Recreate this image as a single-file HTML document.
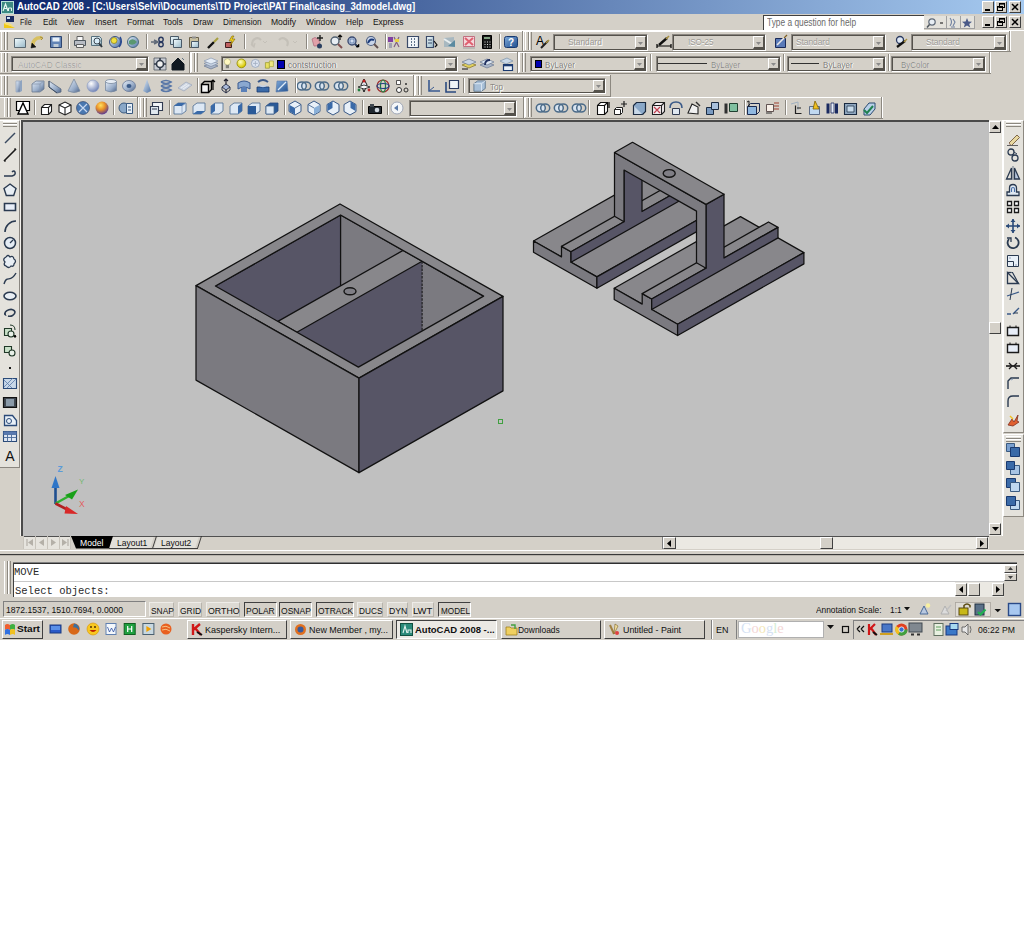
<!DOCTYPE html><html><head><meta charset="utf-8"><style>
html,body{margin:0;padding:0;background:#fff;width:1024px;height:927px;overflow:hidden}
#app{position:absolute;left:0;top:0;width:1024px;height:640px;background:#d4d0c8;overflow:hidden}
#app div, #app svg{position:absolute}
.t{white-space:nowrap;line-height:1;font-family:"Liberation Sans",sans-serif}
</style></head><body><div id="app">
<svg width="0" height="0" style="position:absolute;left:0;top:0"><defs>
<linearGradient id="gDoc" x1="0" y1="0" x2="1" y2="1"><stop offset="0" stop-color="#f4fdff"/><stop offset="1" stop-color="#98b8c8"/></linearGradient>
<linearGradient id="gBlue" x1="0" y1="0" x2="1" y2="1"><stop offset="0" stop-color="#e4eef8"/><stop offset="1" stop-color="#4f74a6"/></linearGradient>
<linearGradient id="gSolid" x1="0" y1="0" x2="1" y2="1"><stop offset="0" stop-color="#e6eef8"/><stop offset="0.6" stop-color="#98acc8"/><stop offset="1" stop-color="#4a6288"/></linearGradient>
<linearGradient id="gDarkBlue" x1="0" y1="0" x2="1" y2="1"><stop offset="0" stop-color="#7ea8d8"/><stop offset="1" stop-color="#1f4f8f"/></linearGradient>
<radialGradient id="gSphere" cx="0.35" cy="0.3" r="0.7"><stop offset="0" stop-color="#ffffff"/><stop offset="1" stop-color="#7486b8"/></radialGradient>
<radialGradient id="gOrange" cx="0.4" cy="0.3" r="0.75"><stop offset="0" stop-color="#ffe060"/><stop offset="0.45" stop-color="#e89028"/><stop offset="1" stop-color="#4a30a0"/></radialGradient>
<radialGradient id="gYellow" cx="0.4" cy="0.35" r="0.6"><stop offset="0" stop-color="#ffffc0"/><stop offset="1" stop-color="#d8c800"/></radialGradient>
</defs></svg>
<div style="left:0px;top:0px;width:1024px;height:14px;background:linear-gradient(to right,#0a246a 0%,#a6caf0 100%)"></div>
<div style="left:1px;top:1px;width:13px;height:13px;background:#3d8a82;border:1px solid #b8e0d8;box-sizing:border-box"></div>
<svg style="left:2px;top:2px" width="11" height="11"><path d="M1,9 L3.5,2 L6,9 M2,6.5 h3" stroke="#eaf6f2" stroke-width="1.2" fill="none"/><path d="M6.5,9 v-3 h3 v3" stroke="#eaf6f2" stroke-width="1" fill="none"/></svg>
<div class="t" style="left:16.50px;top:1.98px;font-size:10.30px;color:#fff;font-weight:bold;font-family:'Liberation Sans',sans-serif;transform:scaleX(0.9350);transform-origin:0 0;">AutoCAD 2008 - [C:\Users\Selvi\Documents\TD Project\PAT Final\casing_3dmodel.dwg]</div>
<div style="left:982px;top:1px;width:12px;height:12px;background:#d4d0c8;border-top:1px solid #fff;border-left:1px solid #fff;border-right:1px solid #404040;border-bottom:1px solid #404040;box-sizing:border-box"></div>
<div style="left:985px;top:9px;width:5px;height:2px;background:#000"></div>
<div style="left:995px;top:1px;width:12px;height:12px;background:#d4d0c8;border-top:1px solid #fff;border-left:1px solid #fff;border-right:1px solid #404040;border-bottom:1px solid #404040;box-sizing:border-box"></div>
<svg style="left:996px;top:2px" width="10" height="10"><rect x="1.5" y="4.5" width="5" height="4" fill="none" stroke="#000"/><rect x="3.5" y="1.5" width="5" height="4" fill="none" stroke="#000"/><rect x="3" y="1" width="6" height="1.6" fill="#000"/><rect x="1" y="4" width="6" height="1.6" fill="#000"/></svg>
<div style="left:1009px;top:1px;width:12px;height:12px;background:#d4d0c8;border-top:1px solid #fff;border-left:1px solid #fff;border-right:1px solid #404040;border-bottom:1px solid #404040;box-sizing:border-box"></div>
<svg style="left:1010px;top:2px" width="10" height="10"><path d="M2,2 L8,8 M8,2 L2,8" stroke="#000" stroke-width="1.5"/></svg>
<div class="t" style="left:20.40px;top:18.01px;font-size:9.20px;color:#141414;font-weight:normal;font-family:'Liberation Sans',sans-serif;transform:scaleX(0.7962);transform-origin:0 0;">File</div>
<div class="t" style="left:42.50px;top:18.01px;font-size:9.20px;color:#141414;font-weight:normal;font-family:'Liberation Sans',sans-serif;transform:scaleX(0.8832);transform-origin:0 0;">Edit</div>
<div class="t" style="left:66.60px;top:18.01px;font-size:9.20px;color:#141414;font-weight:normal;font-family:'Liberation Sans',sans-serif;transform:scaleX(0.8688);transform-origin:0 0;">View</div>
<div class="t" style="left:94.50px;top:18.01px;font-size:9.20px;color:#141414;font-weight:normal;font-family:'Liberation Sans',sans-serif;transform:scaleX(0.9605);transform-origin:0 0;">Insert</div>
<div class="t" style="left:126.70px;top:18.01px;font-size:9.20px;color:#141414;font-weight:normal;font-family:'Liberation Sans',sans-serif;transform:scaleX(0.9232);transform-origin:0 0;">Format</div>
<div class="t" style="left:163.30px;top:18.01px;font-size:9.20px;color:#141414;font-weight:normal;font-family:'Liberation Sans',sans-serif;transform:scaleX(0.9174);transform-origin:0 0;">Tools</div>
<div class="t" style="left:192.70px;top:18.01px;font-size:9.20px;color:#141414;font-weight:normal;font-family:'Liberation Sans',sans-serif;transform:scaleX(0.9306);transform-origin:0 0;">Draw</div>
<div class="t" style="left:222.60px;top:18.01px;font-size:9.20px;color:#141414;font-weight:normal;font-family:'Liberation Sans',sans-serif;transform:scaleX(0.8882);transform-origin:0 0;">Dimension</div>
<div class="t" style="left:270.90px;top:18.01px;font-size:9.20px;color:#141414;font-weight:normal;font-family:'Liberation Sans',sans-serif;transform:scaleX(0.9264);transform-origin:0 0;">Modify</div>
<div class="t" style="left:306.30px;top:18.01px;font-size:9.20px;color:#141414;font-weight:normal;font-family:'Liberation Sans',sans-serif;transform:scaleX(0.9193);transform-origin:0 0;">Window</div>
<div class="t" style="left:345.60px;top:18.01px;font-size:9.20px;color:#141414;font-weight:normal;font-family:'Liberation Sans',sans-serif;transform:scaleX(0.8983);transform-origin:0 0;">Help</div>
<div class="t" style="left:372.50px;top:18.01px;font-size:9.20px;color:#141414;font-weight:normal;font-family:'Liberation Sans',sans-serif;transform:scaleX(0.9178);transform-origin:0 0;">Express</div>
<svg style="left:3px;top:15px" width="14" height="14"><path d="M1,8 L12,13 L1,13z" fill="#f0c818"/><path d="M1,9 Q4,5 11,12" fill="#f8e070"/><rect x="3" y="1" width="8" height="6" fill="#1a2a60"/><rect x="4" y="2" width="3" height="2" fill="#d0e0f0"/></svg>
<div style="left:763px;top:15px;width:161px;height:15px;background:#fff;border-top:1px solid #404040;border-left:1px solid #404040;box-sizing:border-box"></div>
<div class="t" style="left:767.00px;top:18.14px;font-size:10.00px;color:#6a6a6a;font-weight:normal;font-family:'Liberation Sans',sans-serif;transform:scaleX(0.8347);transform-origin:0 0;">Type a question for help</div>
<div style="left:924px;top:16px;width:23px;height:13px;background:#e4e2dc;border-right:1px solid #a0a0a0;border-bottom:1px solid #a0a0a0;box-sizing:border-box"></div>
<div style="left:947px;top:16px;width:14px;height:13px;background:#e4e2dc;border-right:1px solid #a0a0a0;border-bottom:1px solid #a0a0a0;box-sizing:border-box"></div>
<div style="left:961px;top:16px;width:14px;height:13px;background:#e4e2dc;border-right:1px solid #a0a0a0;border-bottom:1px solid #a0a0a0;box-sizing:border-box"></div>
<svg style="left:926px;top:17px" width="48" height="12"><circle cx="6" cy="5" r="3.2" fill="#e8eef4" stroke="#606a78" stroke-width="1.2"/><path d="M3.5,7.5 l-2.5,3" stroke="#505860" stroke-width="1.5"/><path d="M14,6 h3" stroke="#303030" stroke-width="1.2"/><path d="M24,1 q3,4 0,8 M27,2 l2,3 -2,4 M25,10 h4" stroke="#7080a0" stroke-width="1.1" fill="none"/><path d="M41,1 l1.4,3.5 3.6,0.2 -2.8,2.3 1,3.6 -3.2,-2.1 -3.2,2.1 1,-3.6 -2.8,-2.3 3.6,-0.2z" fill="#4a5a88"/></svg>
<div style="left:982px;top:16px;width:12px;height:12px;background:#d4d0c8;border-top:1px solid #fff;border-left:1px solid #fff;border-right:1px solid #404040;border-bottom:1px solid #404040;box-sizing:border-box"></div>
<div style="left:985px;top:24px;width:5px;height:2px;background:#000"></div>
<div style="left:995px;top:16px;width:12px;height:12px;background:#d4d0c8;border-top:1px solid #fff;border-left:1px solid #fff;border-right:1px solid #404040;border-bottom:1px solid #404040;box-sizing:border-box"></div>
<svg style="left:996px;top:17px" width="10" height="10"><rect x="1.5" y="4.5" width="5" height="4" fill="none" stroke="#000"/><rect x="3.5" y="1.5" width="5" height="4" fill="none" stroke="#000"/><rect x="3" y="1" width="6" height="1.6" fill="#000"/><rect x="1" y="4" width="6" height="1.6" fill="#000"/></svg>
<div style="left:1009px;top:16px;width:12px;height:12px;background:#d4d0c8;border-top:1px solid #fff;border-left:1px solid #fff;border-right:1px solid #404040;border-bottom:1px solid #404040;box-sizing:border-box"></div>
<svg style="left:1010px;top:17px" width="10" height="10"><path d="M2,2 L8,8 M8,2 L2,8" stroke="#000" stroke-width="1.5"/></svg>
<div style="left:0px;top:30px;width:1024px;height:1px;background:#fff"></div>
<div style="left:0px;top:31px;width:1024px;height:1px;background:#fff"></div>
<div style="left:0px;top:51px;width:1024px;height:1px;background:#8c8880"></div>
<div style="left:0px;top:52px;width:1024px;height:1px;background:#fff"></div>
<div style="left:0px;top:73px;width:1024px;height:1px;background:#8c8880"></div>
<div style="left:0px;top:75px;width:1024px;height:1px;background:#fff"></div>
<div style="left:0px;top:96px;width:1024px;height:1px;background:#8c8880"></div>
<div style="left:0px;top:97px;width:1024px;height:1px;background:#fff"></div>
<div style="left:0px;top:118px;width:1024px;height:1px;background:#8c8880"></div>
<div style="left:0px;top:74px;width:1024px;height:1px;background:#d4d0c8"></div>
<div style="left:1px;top:32px;width:1px;height:18px;background:#fff"></div>
<div style="left:4px;top:32px;width:1px;height:18px;background:#8c8880"></div>
<div style="left:5px;top:32px;width:1px;height:18px;background:#fff"></div>
<div style="left:7px;top:32px;width:1px;height:18px;background:#8c8880"></div>
<svg style="position:absolute;left:11.5px;top:33.5px;overflow:visible" width="16.0" height="16.0" viewBox="0 0 16 16"><path d="M2.5,4.5 h9 l2,1.5 v7.5 h-11z" fill="url(#gDoc)" stroke="#5a6872" stroke-width="1"/></svg>
<svg style="position:absolute;left:30.0px;top:33.5px;overflow:visible" width="16.0" height="16.0" viewBox="0 0 16 16"><path d="M3,12 C2,7 6,3 12,4" fill="none" stroke="#d8c060" stroke-width="3.5"/><path d="M2,9 l4,4 l-5,1z" fill="#111" stroke="#111" stroke-width="0.5"/><path d="M10,3 l3,1 -2,2" fill="none" stroke="#a89040" stroke-width="1"/></svg>
<svg style="position:absolute;left:48.0px;top:33.5px;overflow:visible" width="16.0" height="16.0" viewBox="0 0 16 16"><path d="M2.5,2.5 h11 v11 h-11z" fill="#6284b6" stroke="#2f4670" stroke-width="1"/><path d="M4.5,3.5 h7 v4 h-7z" fill="#e8f0f8" stroke="none" stroke-width="1"/><path d="M5.5,10 h5 v3 h-5z" fill="#c0ccd8" stroke="none" stroke-width="1"/></svg>
<svg style="position:absolute;left:71.5px;top:33.5px;overflow:visible" width="16.0" height="16.0" viewBox="0 0 16 16"><path d="M5,2.5 h6 v4 h-6z" fill="#fafafa" stroke="#606060" stroke-width="1"/><path d="M2.5,6.5 h11 v5 h-11z" fill="#b8bcc4" stroke="#505860" stroke-width="1"/><path d="M4.5,10.5 h7 v3 h-7z" fill="#f0f0f0" stroke="#606060" stroke-width="1"/></svg>
<svg style="position:absolute;left:89.0px;top:33.5px;overflow:visible" width="16.0" height="16.0" viewBox="0 0 16 16"><path d="M2.5,2.5 h8 l2,2 v7 h-10z" fill="url(#gDoc)" stroke="#56707e" stroke-width="1"/><path d="M9,8 l4,5" fill="none" stroke="#303840" stroke-width="2"/><circle cx="8" cy="7" r="3" fill="#d8ecf8" stroke="#404a54"/></svg>
<svg style="position:absolute;left:107.5px;top:33.5px;overflow:visible" width="16.0" height="16.0" viewBox="0 0 16 16"><circle cx="7" cy="8" r="5.5" fill="url(#gBlue)" stroke="#3a5080"/><circle cx="6" cy="6.5" r="3" fill="#f0e040" stroke="#807000" stroke-width="0.6"/><path d="M12,3 q3,5 -1,10" fill="none" stroke="#2a4a90" stroke-width="1.6"/></svg>
<svg style="position:absolute;left:125.0px;top:33.5px;overflow:visible" width="16.0" height="16.0" viewBox="0 0 16 16"><circle cx="8" cy="8" r="5.5" fill="url(#gBlue)" stroke="#4a6a80"/><path d="M4,7 q4,-4 8,1 q-3,4 -8,2z" fill="#5a9870" stroke="none" stroke-width="1"/></svg>
<svg style="position:absolute;left:150.0px;top:33.5px;overflow:visible" width="16.0" height="16.0" viewBox="0 0 16 16"><path d="M1,8 h7 M4,6 l4,2 l-4,2" fill="none" stroke="#606a78" stroke-width="1.4"/><circle cx="11" cy="5.5" r="2.2" fill="none" stroke="#2a3a60" stroke-width="1.4"/><circle cx="11" cy="10.5" r="2.2" fill="none" stroke="#2a3a60" stroke-width="1.4"/></svg>
<svg style="position:absolute;left:168.0px;top:33.5px;overflow:visible" width="16.0" height="16.0" viewBox="0 0 16 16"><path d="M2.5,2.5 h8 v8 h-8z" fill="url(#gDoc)" stroke="#4a5a68" stroke-width="1"/><path d="M5.5,5.5 h8 v8 h-8z" fill="url(#gDoc)" stroke="#4a5a68" stroke-width="1"/></svg>
<svg style="position:absolute;left:186.0px;top:33.5px;overflow:visible" width="16.0" height="16.0" viewBox="0 0 16 16"><path d="M3.5,3.5 h9 v10 h-9z" fill="#c8c0a0" stroke="#6a6048" stroke-width="1"/><path d="M5.5,7.5 h7 v6 h-7z" fill="url(#gDoc)" stroke="#4a5a68" stroke-width="1"/><path d="M6,2.5 h4 v2 h-4z" fill="#909090" stroke="none" stroke-width="1"/></svg>
<svg style="position:absolute;left:205.0px;top:33.5px;overflow:visible" width="16.0" height="16.0" viewBox="0 0 16 16"><path d="M3,14 l6,-6" fill="none" stroke="#111" stroke-width="2.4"/><path d="M9,8 l4,-4" fill="none" stroke="#a8a040" stroke-width="2.2"/></svg>
<svg style="position:absolute;left:223.0px;top:33.5px;overflow:visible" width="16.0" height="16.0" viewBox="0 0 16 16"><path d="M2.5,8.5 h6 v5 h-6z" fill="#c06060" stroke="#402020" stroke-width="1"/><path d="M9,2 l-3,5 h3 l-2,5 l5,-7 h-3 l2,-3z" fill="#f0d020" stroke="#806800" stroke-width="0.6"/></svg>
<svg style="position:absolute;left:249.0px;top:33.5px;overflow:visible" width="16.0" height="16.0" viewBox="0 0 16 16"><path d="M4,12 C1,6 8,2 12,6" fill="none" stroke="#c4c0b8" stroke-width="2.2"/><path d="M2,10 l3,3 1,-4" fill="none" stroke="#c4c0b8" stroke-width="1.2"/></svg>
<svg style="position:absolute;left:262.0px;top:33.5px;overflow:visible" width="16.0" height="16.0" viewBox="0 0 16 16"><path d="M1,7 l2,2 l2,-2" fill="none" stroke="#c4c0b8" stroke-width="1"/></svg>
<svg style="position:absolute;left:274.5px;top:33.5px;overflow:visible" width="16.0" height="16.0" viewBox="0 0 16 16"><path d="M12,12 C15,6 8,2 4,6" fill="none" stroke="#c4c0b8" stroke-width="2.2"/></svg>
<svg style="position:absolute;left:291.5px;top:33.5px;overflow:visible" width="16.0" height="16.0" viewBox="0 0 16 16"><path d="M1,7 l2,2 l2,-2" fill="none" stroke="#c4c0b8" stroke-width="1"/></svg>
<svg style="position:absolute;left:308.5px;top:33.5px;overflow:visible" width="16.0" height="16.0" viewBox="0 0 16 16"><path d="M3,5 q3,-3 6,0 l2,4 q-2,4 -6,3z" fill="#e0a0a8" stroke="#b07080" stroke-width="0.8"/><path d="M11,1 v6 M8,4 h6" fill="none" stroke="#202020" stroke-width="1.4"/><circle cx="10.5" cy="12" r="2.5" fill="#2a3f60"/></svg>
<svg style="position:absolute;left:327.7px;top:33.5px;overflow:visible" width="16.0" height="16.0" viewBox="0 0 16 16"><circle cx="7" cy="7" r="4" fill="#e8eef4" stroke="#506070" stroke-width="1.4"/><path d="M10,10 l4,4" fill="none" stroke="#805050" stroke-width="2"/><path d="M12,1 v5 M10,3 l2,-2 2,2" fill="none" stroke="#101010" stroke-width="1.2"/></svg>
<svg style="position:absolute;left:345.0px;top:33.5px;overflow:visible" width="16.0" height="16.0" viewBox="0 0 16 16"><circle cx="7" cy="7" r="4" fill="#d0dcf0" stroke="#3a4a70" stroke-width="1.4"/><path d="M10,10 l3,3" fill="none" stroke="#304060" stroke-width="2"/><path d="M11,13 h3 v-3z" fill="#000" stroke="#000" stroke-width="0.5"/><path d="M5,5 h4 v4 h-4z" fill="none" stroke="#5070a0" stroke-width="0.8"/></svg>
<svg style="position:absolute;left:363.7px;top:33.5px;overflow:visible" width="16.0" height="16.0" viewBox="0 0 16 16"><circle cx="7" cy="7" r="4.5" fill="#c8d4e8" stroke="#506080" stroke-width="1.2"/><path d="M10,10 l4,4" fill="none" stroke="#605050" stroke-width="2"/><path d="M4,9 q2,-5 6,-3" fill="none" stroke="#1a3a7a" stroke-width="2"/></svg>
<svg style="position:absolute;left:386.4px;top:33.5px;overflow:visible" width="16.0" height="16.0" viewBox="0 0 16 16"><path d="M2,3 h5 v5 h-5z" fill="#8040a0" stroke="none" stroke-width="1"/><path d="M8,3 l5,10 M13,3 l-5,10" fill="none" stroke="#806080" stroke-width="1.2"/><path d="M3,9 h3 v5 h-3z" fill="#a0a0b0" stroke="none" stroke-width="1"/><path d="M9,5 h4 v3 h-4z" fill="#e8d040" stroke="none" stroke-width="1"/></svg>
<svg style="position:absolute;left:405.4px;top:33.5px;overflow:visible" width="16.0" height="16.0" viewBox="0 0 16 16"><path d="M2.5,2.5 h11 v11 h-11z" fill="#f0f4f8" stroke="#3a4a68" stroke-width="1.2"/><path d="M6,5 h1 M9,5 h1 M6,8 h1 M9,8 h1 M6,11 h1 M9,11 h1" fill="none" stroke="#304868" stroke-width="1.6"/></svg>
<svg style="position:absolute;left:424.0px;top:33.5px;overflow:visible" width="16.0" height="16.0" viewBox="0 0 16 16"><path d="M2.5,2.5 h7 v11 h-7z" fill="url(#gDoc)" stroke="#3a4a68" stroke-width="1.2"/><path d="M4,6 h4 M4,9 h4" fill="none" stroke="#3a4a68" stroke-width="1"/><path d="M10,7 l3,4 l-2,2" fill="none" stroke="#101010" stroke-width="1.2"/></svg>
<svg style="position:absolute;left:441.6px;top:33.5px;overflow:visible" width="16.0" height="16.0" viewBox="0 0 16 16"><path d="M2,4 l10,-1 v10 l-10,0z" fill="#a8b8c0" stroke="none" stroke-width="1"/><path d="M2,5 l8,5" fill="none" stroke="#e8eef0" stroke-width="2"/><path d="M6,12 l7,-6 v7z" fill="#5a8aa0" stroke="none" stroke-width="1"/></svg>
<svg style="position:absolute;left:460.8px;top:33.5px;overflow:visible" width="16.0" height="16.0" viewBox="0 0 16 16"><path d="M2.5,2.5 h11 v10 h-11z" fill="#f4d8dc" stroke="#c07080" stroke-width="1"/><path d="M4,4 l8,7 M12,4 l-8,7" fill="none" stroke="#e06070" stroke-width="2"/><path d="M2,14 h12" fill="none" stroke="#a0a0a0" stroke-width="1"/></svg>
<svg style="position:absolute;left:479.0px;top:33.5px;overflow:visible" width="16.0" height="16.0" viewBox="0 0 16 16"><path d="M3.5,1.5 h9 v13 h-9z" fill="#181818" stroke="#000" stroke-width="1"/><path d="M5,3 h6 v2 h-6z" fill="#80a080" stroke="none" stroke-width="1"/><path d="M5.5,8 h1 M8,8 h1 M10.5,8 h1 M5.5,10.5 h1 M8,10.5 h1 M10.5,10.5 h1 M5.5,13 h1 M8,13 h1 M10.5,13 h1" fill="none" stroke="#e0e0e0" stroke-width="1.2"/></svg>
<svg style="position:absolute;left:502.5px;top:33.5px;overflow:visible" width="16.0" height="16.0" viewBox="0 0 16 16"><rect x="1.5" y="2.5" width="13" height="11" rx="2" fill="url(#gDarkBlue)" stroke="#1a3a70"/><text x="8" y="12" font-family="Liberation Sans" font-weight="bold" font-size="10" fill="#fff" text-anchor="middle">?</text></svg>
<div style="left:68px;top:34px;width:1px;height:15px;background:#8c8880"></div>
<div style="left:69px;top:34px;width:1px;height:15px;background:#fff"></div>
<div style="left:146px;top:34px;width:1px;height:15px;background:#8c8880"></div>
<div style="left:147px;top:34px;width:1px;height:15px;background:#fff"></div>
<div style="left:243.6px;top:34px;width:1px;height:15px;background:#8c8880"></div>
<div style="left:244.6px;top:34px;width:1px;height:15px;background:#fff"></div>
<div style="left:305.5px;top:34px;width:1px;height:15px;background:#8c8880"></div>
<div style="left:306.5px;top:34px;width:1px;height:15px;background:#fff"></div>
<div style="left:384.5px;top:34px;width:1px;height:15px;background:#8c8880"></div>
<div style="left:385.5px;top:34px;width:1px;height:15px;background:#fff"></div>
<div style="left:499px;top:34px;width:1px;height:15px;background:#8c8880"></div>
<div style="left:500px;top:34px;width:1px;height:15px;background:#fff"></div>
<div style="left:522px;top:31px;width:1px;height:20px;background:#8c8880"></div>
<div style="left:523px;top:31px;width:1px;height:20px;background:#fff"></div>
<div style="left:525px;top:32px;width:1px;height:18px;background:#fff"></div>
<div style="left:528px;top:32px;width:1px;height:18px;background:#8c8880"></div>
<div style="left:529px;top:32px;width:1px;height:18px;background:#fff"></div>
<div style="left:531px;top:32px;width:1px;height:18px;background:#8c8880"></div>
<svg style="position:absolute;left:535.0px;top:33.5px;overflow:visible" width="16.0" height="16.0" viewBox="0 0 16 16"><text x="1" y="11" font-family="Liberation Sans" font-size="12" fill="#000">A</text><path d="M6,14 l7,-7" fill="none" stroke="#202020" stroke-width="2"/><path d="M11,9 l3,-3" fill="none" stroke="#a89040" stroke-width="1.6"/></svg>
<div style="left:553px;top:34px;width:94.7px;height:17px;background:#d4d0c8;border-top:1px solid #8a8680;border-left:1px solid #8a8680;border-right:1px solid #fff;border-bottom:1px solid #fff;box-sizing:border-box"></div>
<div style="left:554px;top:35px;width:92.7px;height:15px;border:1px solid #55524c;box-sizing:border-box"></div>
<div style="left:634.7px;top:36px;width:11px;height:13px;background:#d4d0c8;border-top:1px solid #fff;border-left:1px solid #fff;border-right:1px solid #55524c;border-bottom:2px solid #55524c;box-sizing:border-box"></div>
<svg style="left:637.7px;top:41.5px" width="5" height="3"><path d="M0,0 L5,0 L2.5,3z" fill="#8a8a8a"/></svg>
<div class="t" style="left:568.60px;top:38.07px;font-size:9.60px;color:#fff;font-weight:normal;font-family:'Liberation Sans',sans-serif;transform:scaleX(0.8674);transform-origin:0 0;">Standard</div>
<div class="t" style="left:568.00px;top:37.47px;font-size:9.60px;color:#9c9a96;font-weight:normal;font-family:'Liberation Sans',sans-serif;transform:scaleX(0.8674);transform-origin:0 0;">Standard</div>
<svg style="position:absolute;left:655.5px;top:33.5px;overflow:visible" width="16.0" height="16.0" viewBox="0 0 16 16"><path d="M1,12 h14 M1,10 v4 M15,10 v4" fill="none" stroke="#000" stroke-width="1.2"/><path d="M3,11 l8,-7" fill="none" stroke="#101010" stroke-width="2.4"/><path d="M10,5 l3,-3" fill="none" stroke="#a89040" stroke-width="1.6"/></svg>
<div style="left:672.4px;top:34px;width:93.9px;height:17px;background:#d4d0c8;border-top:1px solid #8a8680;border-left:1px solid #8a8680;border-right:1px solid #fff;border-bottom:1px solid #fff;box-sizing:border-box"></div>
<div style="left:673.4px;top:35px;width:91.9px;height:15px;border:1px solid #55524c;box-sizing:border-box"></div>
<div style="left:753.3px;top:36px;width:11px;height:13px;background:#d4d0c8;border-top:1px solid #fff;border-left:1px solid #fff;border-right:1px solid #55524c;border-bottom:2px solid #55524c;box-sizing:border-box"></div>
<svg style="left:756.3px;top:41.5px" width="5" height="3"><path d="M0,0 L5,0 L2.5,3z" fill="#8a8a8a"/></svg>
<div class="t" style="left:688.40px;top:38.07px;font-size:9.60px;color:#fff;font-weight:normal;font-family:'Liberation Sans',sans-serif;transform:scaleX(0.8385);transform-origin:0 0;">ISO-25</div>
<div class="t" style="left:687.80px;top:37.47px;font-size:9.60px;color:#9c9a96;font-weight:normal;font-family:'Liberation Sans',sans-serif;transform:scaleX(0.8385);transform-origin:0 0;">ISO-25</div>
<svg style="position:absolute;left:772.6px;top:33.5px;overflow:visible" width="16.0" height="16.0" viewBox="0 0 16 16"><path d="M2.5,4.5 h10 v9 h-10z" fill="#5a7ab8" stroke="#1a2a58" stroke-width="1"/><path d="M4,11 l9,-9" fill="none" stroke="#e8e8e8" stroke-width="1.6"/><path d="M11,4 l3,-3" fill="none" stroke="#806020" stroke-width="1.2"/></svg>
<div style="left:791px;top:34px;width:94.5px;height:17px;background:#d4d0c8;border-top:1px solid #8a8680;border-left:1px solid #8a8680;border-right:1px solid #fff;border-bottom:1px solid #fff;box-sizing:border-box"></div>
<div style="left:792px;top:35px;width:92.5px;height:15px;border:1px solid #55524c;box-sizing:border-box"></div>
<div style="left:872.5px;top:36px;width:11px;height:13px;background:#d4d0c8;border-top:1px solid #fff;border-left:1px solid #fff;border-right:1px solid #55524c;border-bottom:2px solid #55524c;box-sizing:border-box"></div>
<svg style="left:875.5px;top:41.5px" width="5" height="3"><path d="M0,0 L5,0 L2.5,3z" fill="#8a8a8a"/></svg>
<div class="t" style="left:796.10px;top:38.07px;font-size:9.60px;color:#fff;font-weight:normal;font-family:'Liberation Sans',sans-serif;transform:scaleX(0.8674);transform-origin:0 0;">Standard</div>
<div class="t" style="left:795.50px;top:37.47px;font-size:9.60px;color:#9c9a96;font-weight:normal;font-family:'Liberation Sans',sans-serif;transform:scaleX(0.8674);transform-origin:0 0;">Standard</div>
<svg style="position:absolute;left:893.0px;top:33.5px;overflow:visible" width="16.0" height="16.0" viewBox="0 0 16 16"><circle cx="7" cy="6" r="3.5" fill="#dfe8f4" stroke="#2a3a60" stroke-width="1.3"/><path d="M4,13 l8,-6" fill="none" stroke="#101010" stroke-width="2.2"/><path d="M11,8 l3,-3" fill="none" stroke="#a89040" stroke-width="1.4"/></svg>
<div style="left:910.8px;top:34px;width:96.6px;height:17px;background:#d4d0c8;border-top:1px solid #8a8680;border-left:1px solid #8a8680;border-right:1px solid #fff;border-bottom:1px solid #fff;box-sizing:border-box"></div>
<div style="left:911.8px;top:35px;width:94.6px;height:15px;border:1px solid #55524c;box-sizing:border-box"></div>
<div style="left:994.4px;top:36px;width:11px;height:13px;background:#d4d0c8;border-top:1px solid #fff;border-left:1px solid #fff;border-right:1px solid #55524c;border-bottom:2px solid #55524c;box-sizing:border-box"></div>
<svg style="left:997.4px;top:41.5px" width="5" height="3"><path d="M0,0 L5,0 L2.5,3z" fill="#8a8a8a"/></svg>
<div class="t" style="left:926.10px;top:38.07px;font-size:9.60px;color:#fff;font-weight:normal;font-family:'Liberation Sans',sans-serif;transform:scaleX(0.8674);transform-origin:0 0;">Standard</div>
<div class="t" style="left:925.50px;top:37.47px;font-size:9.60px;color:#9c9a96;font-weight:normal;font-family:'Liberation Sans',sans-serif;transform:scaleX(0.8674);transform-origin:0 0;">Standard</div>
<div style="left:1009px;top:31px;width:1px;height:20px;background:#8c8880"></div>
<div style="left:1010px;top:31px;width:1px;height:20px;background:#fff"></div>
<div style="left:1011px;top:31px;width:13px;height:21px;background:#d4d0c8"></div>
<div style="left:1px;top:53px;width:1px;height:19px;background:#fff"></div>
<div style="left:4px;top:53px;width:1px;height:19px;background:#8c8880"></div>
<div style="left:5px;top:53px;width:1px;height:19px;background:#fff"></div>
<div style="left:7px;top:53px;width:1px;height:19px;background:#8c8880"></div>
<div style="left:11.4px;top:56px;width:137.2px;height:16px;background:#d4d0c8;border-top:1px solid #8a8680;border-left:1px solid #8a8680;border-right:1px solid #fff;border-bottom:1px solid #fff;box-sizing:border-box"></div>
<div style="left:12.4px;top:57px;width:135.2px;height:14px;border:1px solid #55524c;box-sizing:border-box"></div>
<div style="left:135.6px;top:58px;width:11px;height:12px;background:#d4d0c8;border-top:1px solid #fff;border-left:1px solid #fff;border-right:1px solid #55524c;border-bottom:2px solid #55524c;box-sizing:border-box"></div>
<svg style="left:138.6px;top:63px" width="5" height="3"><path d="M0,0 L5,0 L2.5,3z" fill="#8a8a8a"/></svg>
<div class="t" style="left:18.10px;top:61.21px;font-size:9.20px;color:#fff;font-weight:normal;font-family:'Liberation Sans',sans-serif;transform:scaleX(0.9043);transform-origin:0 0;">AutoCAD Classic</div>
<div class="t" style="left:17.50px;top:60.61px;font-size:9.20px;color:#9c9a96;font-weight:normal;font-family:'Liberation Sans',sans-serif;transform:scaleX(0.9043);transform-origin:0 0;">AutoCAD Classic</div>
<svg style="position:absolute;left:151.5px;top:55.5px;overflow:visible" width="16.0" height="16.0" viewBox="0 0 16 16"><path d="M2,2 h12 v12 h-12z" fill="#c8ccd4" stroke="#505860" stroke-width="0.8"/><circle cx="8" cy="8" r="3.5" fill="#f0f0f0" stroke="#303a48" stroke-width="1.6"/><path d="M8,2 v3 M8,11 v3 M2,8 h3 M11,8 h3" fill="none" stroke="#303a48" stroke-width="1.6"/></svg>
<svg style="position:absolute;left:169.8px;top:55.5px;overflow:visible" width="16.0" height="16.0" viewBox="0 0 16 16"><path d="M2,8 l6,-6 l6,6 v6 h-12z" fill="#101820" stroke="#101820" stroke-width="1"/><path d="M12,2 l2,2" fill="none" stroke="#607080" stroke-width="1"/></svg>
<div style="left:189px;top:52px;width:1px;height:21px;background:#8c8880"></div>
<div style="left:190px;top:52px;width:1px;height:21px;background:#fff"></div>
<div style="left:191px;top:53px;width:1px;height:19px;background:#fff"></div>
<div style="left:194px;top:53px;width:1px;height:19px;background:#8c8880"></div>
<div style="left:195px;top:53px;width:1px;height:19px;background:#fff"></div>
<div style="left:197px;top:53px;width:1px;height:19px;background:#8c8880"></div>
<svg style="position:absolute;left:202.8px;top:55.5px;overflow:visible" width="16.0" height="16.0" viewBox="0 0 16 16"><path d="M1,10 l7,-3 l7,3 l-7,3z" fill="#a8b4c8" stroke="#6a7890" stroke-width="0.7"/><path d="M1,7.5 l7,-3 l7,3 l-7,3z" fill="#c8d4e4" stroke="#7a88a0" stroke-width="0.7"/><path d="M1,5 l7,-3 l7,3 l-7,3z" fill="#e4ecf6" stroke="#8a98b0" stroke-width="0.7"/></svg>
<div style="left:221px;top:56px;width:236.8px;height:16px;background:#d4d0c8;border-top:1px solid #8a8680;border-left:1px solid #8a8680;border-right:1px solid #fff;border-bottom:1px solid #fff;box-sizing:border-box"></div>
<div style="left:222px;top:57px;width:234.8px;height:14px;border:1px solid #55524c;box-sizing:border-box"></div>
<div style="left:444.8px;top:58px;width:11px;height:12px;background:#d4d0c8;border-top:1px solid #fff;border-left:1px solid #fff;border-right:1px solid #55524c;border-bottom:2px solid #55524c;box-sizing:border-box"></div>
<svg style="left:447.8px;top:63px" width="5" height="3"><path d="M0,0 L5,0 L2.5,3z" fill="#8a8a8a"/></svg>
<div class="t" style="left:288.90px;top:61.21px;font-size:9.20px;color:#fff;font-weight:normal;font-family:'Liberation Sans',sans-serif;transform:scaleX(0.9338);transform-origin:0 0;">contstruction</div>
<div class="t" style="left:288.30px;top:60.61px;font-size:9.20px;color:#7a7a7a;font-weight:normal;font-family:'Liberation Sans',sans-serif;transform:scaleX(0.9338);transform-origin:0 0;">contstruction</div>
<svg style="position:absolute;left:221.1px;top:57.1px;overflow:visible" width="12.8" height="12.8" viewBox="0 0 16 16"><circle cx="8" cy="6" r="4" fill="#fff8c0" stroke="#a0a070" stroke-width="0.8"/><path d="M6,10 h4 v4 h-4z" fill="#808078" stroke="none" stroke-width="1"/></svg>
<svg style="position:absolute;left:234.6px;top:57.1px;overflow:visible" width="12.8" height="12.8" viewBox="0 0 16 16"><circle cx="8" cy="8" r="5.5" fill="url(#gYellow)" stroke="#908800" stroke-width="1"/></svg>
<svg style="position:absolute;left:249.1px;top:57.1px;overflow:visible" width="12.8" height="12.8" viewBox="0 0 16 16"><circle cx="8" cy="8" r="5" fill="#dde4f0" stroke="#90a0b8" stroke-width="1"/><path d="M5,8 h6 M8,5 v6" fill="none" stroke="#a0acc0" stroke-width="1"/></svg>
<svg style="position:absolute;left:262.6px;top:57.1px;overflow:visible" width="12.8" height="12.8" viewBox="0 0 16 16"><path d="M3,7 h5 v7 h-5z" fill="#e8e060" stroke="#909020" stroke-width="0.8"/><path d="M8,5 h5 v7 h-5z" fill="#f0e880" stroke="#a0a030" stroke-width="0.8"/></svg>
<div style="left:277px;top:59.5px;width:8px;height:9px;background:#0000b0;border:1px solid #000;box-sizing:border-box"></div>
<svg style="position:absolute;left:460.8px;top:55.5px;overflow:visible" width="16.0" height="16.0" viewBox="0 0 16 16"><path d="M1,9 l7,-3 l7,3 l-7,3z" fill="#e0d060" stroke="#807020" stroke-width="0.7"/><path d="M1,6 l7,-3 l7,3 l-7,3z" fill="#c8d4e4" stroke="#6a7890" stroke-width="0.7"/><path d="M1,13 h6" fill="none" stroke="#303030" stroke-width="1.2"/></svg>
<svg style="position:absolute;left:479.4px;top:55.5px;overflow:visible" width="16.0" height="16.0" viewBox="0 0 16 16"><path d="M1,9 l7,-3 l7,3 l-7,3z" fill="#a8b4c8" stroke="#6a7890" stroke-width="0.7"/><path d="M1,6 l7,-3 l7,3 l-7,3z" fill="#dce6f2" stroke="#6a7890" stroke-width="0.7"/><path d="M6,9 q0,-5 5,-5" fill="none" stroke="#203060" stroke-width="1.8"/></svg>
<svg style="position:absolute;left:497.7px;top:55.5px;overflow:visible" width="16.0" height="16.0" viewBox="0 0 16 16"><path d="M2,5 l7,-3 l6,3 l-7,3z" fill="#c8d8e8" stroke="#7a90a8" stroke-width="0.7"/><path d="M5.5,8.5 h9 v6 h-9z" fill="#e8f0f8" stroke="#1a3a70" stroke-width="1.2"/><path d="M5.5,9.5 h9" fill="none" stroke="#1a3a70" stroke-width="1.6"/></svg>
<div style="left:516.5px;top:52px;width:1px;height:21px;background:#8c8880"></div>
<div style="left:517.5px;top:52px;width:1px;height:21px;background:#fff"></div>
<div style="left:519px;top:53px;width:1px;height:19px;background:#fff"></div>
<div style="left:522px;top:53px;width:1px;height:19px;background:#8c8880"></div>
<div style="left:523px;top:53px;width:1px;height:19px;background:#fff"></div>
<div style="left:525px;top:53px;width:1px;height:19px;background:#8c8880"></div>
<div style="left:530px;top:56px;width:117px;height:16px;background:#d4d0c8;border-top:1px solid #8a8680;border-left:1px solid #8a8680;border-right:1px solid #fff;border-bottom:1px solid #fff;box-sizing:border-box"></div>
<div style="left:531px;top:57px;width:115px;height:14px;border:1px solid #55524c;box-sizing:border-box"></div>
<div style="left:634px;top:58px;width:11px;height:12px;background:#d4d0c8;border-top:1px solid #fff;border-left:1px solid #fff;border-right:1px solid #55524c;border-bottom:2px solid #55524c;box-sizing:border-box"></div>
<svg style="left:637px;top:63px" width="5" height="3"><path d="M0,0 L5,0 L2.5,3z" fill="#8a8a8a"/></svg>
<div class="t" style="left:546.00px;top:61.21px;font-size:9.20px;color:#fff;font-weight:normal;font-family:'Liberation Sans',sans-serif;transform:scaleX(0.8890);transform-origin:0 0;">ByLayer</div>
<div class="t" style="left:545.40px;top:60.61px;font-size:9.20px;color:#868480;font-weight:normal;font-family:'Liberation Sans',sans-serif;transform:scaleX(0.8890);transform-origin:0 0;">ByLayer</div>
<div style="left:535px;top:60px;width:7px;height:8px;background:#0000b0;border:1px solid #000;box-sizing:border-box"></div>
<div style="left:650px;top:54px;width:1px;height:17px;background:#8c8880"></div>
<div style="left:651px;top:54px;width:1px;height:17px;background:#fff"></div>
<div style="left:655.9px;top:56px;width:124.7px;height:16px;background:#d4d0c8;border-top:1px solid #8a8680;border-left:1px solid #8a8680;border-right:1px solid #fff;border-bottom:1px solid #fff;box-sizing:border-box"></div>
<div style="left:656.9px;top:57px;width:122.7px;height:14px;border:1px solid #55524c;box-sizing:border-box"></div>
<div style="left:767.6px;top:58px;width:11px;height:12px;background:#d4d0c8;border-top:1px solid #fff;border-left:1px solid #fff;border-right:1px solid #55524c;border-bottom:2px solid #55524c;box-sizing:border-box"></div>
<svg style="left:770.6px;top:63px" width="5" height="3"><path d="M0,0 L5,0 L2.5,3z" fill="#8a8a8a"/></svg>
<div class="t" style="left:711.10px;top:61.21px;font-size:9.20px;color:#fff;font-weight:normal;font-family:'Liberation Sans',sans-serif;transform:scaleX(0.8653);transform-origin:0 0;">ByLayer</div>
<div class="t" style="left:710.50px;top:60.61px;font-size:9.20px;color:#868480;font-weight:normal;font-family:'Liberation Sans',sans-serif;transform:scaleX(0.8653);transform-origin:0 0;">ByLayer</div>
<div style="left:658px;top:63px;width:49px;height:1.3px;background:#303030"></div>
<div style="left:783px;top:54px;width:1px;height:17px;background:#8c8880"></div>
<div style="left:784px;top:54px;width:1px;height:17px;background:#fff"></div>
<div style="left:787px;top:56px;width:98.5px;height:16px;background:#d4d0c8;border-top:1px solid #8a8680;border-left:1px solid #8a8680;border-right:1px solid #fff;border-bottom:1px solid #fff;box-sizing:border-box"></div>
<div style="left:788px;top:57px;width:96.5px;height:14px;border:1px solid #55524c;box-sizing:border-box"></div>
<div style="left:872.5px;top:58px;width:11px;height:12px;background:#d4d0c8;border-top:1px solid #fff;border-left:1px solid #fff;border-right:1px solid #55524c;border-bottom:2px solid #55524c;box-sizing:border-box"></div>
<svg style="left:875.5px;top:63px" width="5" height="3"><path d="M0,0 L5,0 L2.5,3z" fill="#8a8a8a"/></svg>
<div class="t" style="left:823.60px;top:61.21px;font-size:9.20px;color:#fff;font-weight:normal;font-family:'Liberation Sans',sans-serif;transform:scaleX(0.8831);transform-origin:0 0;">ByLayer</div>
<div class="t" style="left:823.00px;top:60.61px;font-size:9.20px;color:#868480;font-weight:normal;font-family:'Liberation Sans',sans-serif;transform:scaleX(0.8831);transform-origin:0 0;">ByLayer</div>
<div style="left:791px;top:63px;width:28px;height:1.3px;background:#303030"></div>
<div style="left:888px;top:54px;width:1px;height:17px;background:#8c8880"></div>
<div style="left:889px;top:54px;width:1px;height:17px;background:#fff"></div>
<div style="left:891.4px;top:56px;width:94.9px;height:16px;background:#d4d0c8;border-top:1px solid #8a8680;border-left:1px solid #8a8680;border-right:1px solid #fff;border-bottom:1px solid #fff;box-sizing:border-box"></div>
<div style="left:892.4px;top:57px;width:92.9px;height:14px;border:1px solid #55524c;box-sizing:border-box"></div>
<div style="left:973.3px;top:58px;width:11px;height:12px;background:#d4d0c8;border-top:1px solid #fff;border-left:1px solid #fff;border-right:1px solid #55524c;border-bottom:2px solid #55524c;box-sizing:border-box"></div>
<svg style="left:976.3px;top:63px" width="5" height="3"><path d="M0,0 L5,0 L2.5,3z" fill="#8a8a8a"/></svg>
<div class="t" style="left:901.10px;top:61.21px;font-size:9.20px;color:#fff;font-weight:normal;font-family:'Liberation Sans',sans-serif;transform:scaleX(0.8648);transform-origin:0 0;">ByColor</div>
<div class="t" style="left:900.50px;top:60.61px;font-size:9.20px;color:#868480;font-weight:normal;font-family:'Liberation Sans',sans-serif;transform:scaleX(0.8648);transform-origin:0 0;">ByColor</div>
<div style="left:989px;top:52px;width:1px;height:21px;background:#8c8880"></div>
<div style="left:990px;top:52px;width:1px;height:21px;background:#fff"></div>
<div style="left:991px;top:52px;width:33px;height:22px;background:#d4d0c8"></div>
<div style="left:1px;top:76px;width:1px;height:19px;background:#fff"></div>
<div style="left:4px;top:76px;width:1px;height:19px;background:#8c8880"></div>
<div style="left:5px;top:76px;width:1px;height:19px;background:#fff"></div>
<div style="left:7px;top:76px;width:1px;height:19px;background:#8c8880"></div>
<svg style="position:absolute;left:11.0px;top:77.5px;overflow:visible" width="16.0" height="16.0" viewBox="0 0 16 16"><path d="M5,3 h4 v11 h-4z" fill="url(#gSolid)" stroke="#9aaaC0" stroke-width="0.8"/><path d="M9,3 l2,-1 v11 l-2,1z" fill="#8fa4c0" stroke="none" stroke-width="1"/></svg>
<svg style="position:absolute;left:29.6px;top:77.5px;overflow:visible" width="16.0" height="16.0" viewBox="0 0 16 16"><path d="M2,6 l4,-3 h8 v8 l-4,3 h-8z" fill="url(#gSolid)" stroke="#6a7a90" stroke-width="0.8"/><path d="M2,6 h8 v8 M10,6 l4,-3" fill="none" stroke="#8a9ab0" stroke-width="0.8"/></svg>
<svg style="position:absolute;left:47.4px;top:77.5px;overflow:visible" width="16.0" height="16.0" viewBox="0 0 16 16"><path d="M2,3 l12,8 v3 l-4,1 l-8,-6z" fill="url(#gSolid)" stroke="#5a6a80" stroke-width="0.8"/><path d="M2,3 v6 l8,6" fill="none" stroke="#3a4a60" stroke-width="1"/></svg>
<svg style="position:absolute;left:66.1px;top:77.5px;overflow:visible" width="16.0" height="16.0" viewBox="0 0 16 16"><path d="M8,1 l-6,12 q6,3 12,0z" fill="url(#gSolid)" stroke="#7a8aa0" stroke-width="0.8"/></svg>
<svg style="position:absolute;left:84.7px;top:77.5px;overflow:visible" width="16.0" height="16.0" viewBox="0 0 16 16"><circle cx="8" cy="8" r="6" fill="url(#gSphere)" stroke="#8a9ac0" stroke-width="0.6"/></svg>
<svg style="position:absolute;left:103.2px;top:77.5px;overflow:visible" width="16.0" height="16.0" viewBox="0 0 16 16"><path d="M2.5,3.5 v9 q5.5,3 11,0 v-9 q-5.5,3 -11,0z" fill="url(#gSolid)" stroke="#7a8aa0" stroke-width="0.8"/><ellipse cx="8" cy="3.5" rx="5.5" ry="2" fill="#e8eef6" stroke="#7a8aa0" stroke-width="0.8"/></svg>
<svg style="position:absolute;left:121.0px;top:77.5px;overflow:visible" width="16.0" height="16.0" viewBox="0 0 16 16"><ellipse cx="8" cy="8" rx="6.5" ry="5.5" fill="url(#gSolid)" stroke="#6a7a98" stroke-width="0.8"/><ellipse cx="8" cy="8" rx="2.5" ry="2" fill="#3a5a88"/></svg>
<svg style="position:absolute;left:138.8px;top:77.5px;overflow:visible" width="16.0" height="16.0" viewBox="0 0 16 16"><path d="M8,1 l-4,12 l4,2 l4,-2z" fill="url(#gBlue)" stroke="none" stroke-width="1"/></svg>
<svg style="position:absolute;left:158.3px;top:77.5px;overflow:visible" width="16.0" height="16.0" viewBox="0 0 16 16"><path d="M3,4 q5,-3 10,0 q-5,3 -10,0 M3,8 q5,-3 10,0 q-5,3 -10,0 M3,12 q5,-3 10,0 q-5,3 -10,0" fill="none" stroke="#5a78a8" stroke-width="1.6"/></svg>
<svg style="position:absolute;left:177.4px;top:77.5px;overflow:visible" width="16.0" height="16.0" viewBox="0 0 16 16"><path d="M1,10 l8,-6 l6,3 l-8,6z" fill="#d0d8e4" stroke="#a0aabc" stroke-width="0.8"/><path d="M4,10 l6,-4 M6,11 l6,-4" fill="none" stroke="#f0f4f8" stroke-width="0.8"/></svg>
<svg style="position:absolute;left:199.0px;top:77.5px;overflow:visible" width="16.0" height="16.0" viewBox="0 0 16 16"><path d="M2.5,6.5 h7 v8 h-7z" fill="#f4f4f4" stroke="#000" stroke-width="1.4"/><path d="M2.5,6.5 l3,-3 h7 v8 l-3,3" fill="none" stroke="#000" stroke-width="1.4"/><path d="M14,2 v10 M12,4 l2,-2 2,2" fill="none" stroke="#000" stroke-width="1.2"/></svg>
<svg style="position:absolute;left:218.0px;top:77.5px;overflow:visible" width="16.0" height="16.0" viewBox="0 0 16 16"><path d="M4,9 l4,-3 l4,3 l-4,3z" fill="#a8b8d8" stroke="#303850" stroke-width="1"/><path d="M8,1 v5 M6,3 l2,-2 2,2 M8,12 v3" fill="none" stroke="#202030" stroke-width="1.2"/><path d="M4,9 v3 l4,3 l4,-3 v-3" fill="none" stroke="#303850" stroke-width="1"/></svg>
<svg style="position:absolute;left:235.8px;top:77.5px;overflow:visible" width="16.0" height="16.0" viewBox="0 0 16 16"><path d="M2,5 q6,-4 12,0 v6 q-6,-4 -12,0z" fill="#8aa8d0" stroke="#3a5a90" stroke-width="1"/><path d="M5,10 q3,-2 6,0 v4 h-6z" fill="#5a80b8" stroke="none" stroke-width="1"/></svg>
<svg style="position:absolute;left:254.6px;top:77.5px;overflow:visible" width="16.0" height="16.0" viewBox="0 0 16 16"><path d="M3,4 q5,-4 10,0" fill="none" stroke="#3a5888" stroke-width="2"/><path d="M2,9 h12 v5 h-12z" fill="#3a6aa8" stroke="#1a3a70" stroke-width="0.8"/><path d="M4,7 q4,3 8,0" fill="none" stroke="#c0d0e8" stroke-width="1.4"/></svg>
<svg style="position:absolute;left:273.8px;top:77.5px;overflow:visible" width="16.0" height="16.0" viewBox="0 0 16 16"><path d="M3,3 l10,0 l1,10 l-12,1z" fill="url(#gDarkBlue)" stroke="#5a7aa8" stroke-width="0.6"/><path d="M4,12 l8,-8" fill="none" stroke="#e0ecf8" stroke-width="1.2"/></svg>
<svg style="position:absolute;left:296.2px;top:77.5px;overflow:visible" width="16.0" height="16.0" viewBox="0 0 16 16"><ellipse cx="5.8" cy="8" rx="4.5" ry="4" fill="#d8e4f0" stroke="#4a6a88" stroke-width="1.5"/><ellipse cx="10.2" cy="8" rx="4.5" ry="4" fill="none" stroke="#4a6a88" stroke-width="1.5"/></svg>
<svg style="position:absolute;left:314.3px;top:77.5px;overflow:visible" width="16.0" height="16.0" viewBox="0 0 16 16"><ellipse cx="5.8" cy="8" rx="4.5" ry="4" fill="#d8e4f0" stroke="#4a6a88" stroke-width="1.5"/><ellipse cx="10.2" cy="8" rx="4.5" ry="4" fill="none" stroke="#4a6a88" stroke-width="1.5"/></svg>
<svg style="position:absolute;left:333.0px;top:77.5px;overflow:visible" width="16.0" height="16.0" viewBox="0 0 16 16"><ellipse cx="5.8" cy="8" rx="4.5" ry="4" fill="#d8e4f0" stroke="#4a6a88" stroke-width="1.5"/><ellipse cx="10.2" cy="8" rx="4.5" ry="4" fill="none" stroke="#4a6a88" stroke-width="1.5"/></svg>
<svg style="position:absolute;left:355.8px;top:77.5px;overflow:visible" width="16.0" height="16.0" viewBox="0 0 16 16"><path d="M8,1 l-3,6 l3,7 l3,-7z" fill="#e8e8f0" stroke="#1a1a1a" stroke-width="1"/><path d="M2,9 l6,-2 l6,2 l-6,2z" fill="#f8f8f8" stroke="#1a1a1a" stroke-width="0.8"/><circle cx="8" cy="3" r="1.5" fill="#c02020"/><circle cx="3" cy="12" r="1.4" fill="#208040"/><circle cx="13" cy="12" r="1.4" fill="#c03030"/></svg>
<svg style="position:absolute;left:375.0px;top:77.5px;overflow:visible" width="16.0" height="16.0" viewBox="0 0 16 16"><ellipse cx="8" cy="8" rx="6" ry="6" fill="none" stroke="#a03030" stroke-width="1.2"/><ellipse cx="8" cy="8" rx="2.5" ry="6" fill="none" stroke="#208040" stroke-width="1.2"/><ellipse cx="8" cy="8" rx="6" ry="2.5" fill="none" stroke="#204080" stroke-width="1.2"/></svg>
<svg style="position:absolute;left:393.7px;top:77.5px;overflow:visible" width="16.0" height="16.0" viewBox="0 0 16 16"><path d="M2.5,2.5 h4 v4 h-4z" fill="#fff" stroke="#303030" stroke-width="0.8"/><circle cx="5" cy="12" r="2.5" fill="#fff" stroke="#303030"/><circle cx="12" cy="6" r="1" fill="#303030"/><circle cx="12" cy="12" r="2" fill="none" stroke="#303030"/></svg>
<div style="left:196.5px;top:78px;width:1px;height:15px;background:#8c8880"></div>
<div style="left:197.5px;top:78px;width:1px;height:15px;background:#fff"></div>
<div style="left:295px;top:78px;width:1px;height:15px;background:#8c8880"></div>
<div style="left:296px;top:78px;width:1px;height:15px;background:#fff"></div>
<div style="left:353px;top:78px;width:1px;height:15px;background:#8c8880"></div>
<div style="left:354px;top:78px;width:1px;height:15px;background:#fff"></div>
<div style="left:412.5px;top:75px;width:1px;height:21px;background:#8c8880"></div>
<div style="left:413.5px;top:75px;width:1px;height:21px;background:#fff"></div>
<div style="left:415px;top:76px;width:1px;height:19px;background:#fff"></div>
<div style="left:418px;top:76px;width:1px;height:19px;background:#8c8880"></div>
<div style="left:419px;top:76px;width:1px;height:19px;background:#fff"></div>
<div style="left:421px;top:76px;width:1px;height:19px;background:#8c8880"></div>
<svg style="position:absolute;left:426.2px;top:77.5px;overflow:visible" width="16.0" height="16.0" viewBox="0 0 16 16"><path d="M3,2 v11 h11" fill="none" stroke="#3a5a90" stroke-width="1.6"/><path d="M3,13 l5,-4" fill="none" stroke="#3a5a90" stroke-width="1"/></svg>
<svg style="position:absolute;left:444.3px;top:77.5px;overflow:visible" width="16.0" height="16.0" viewBox="0 0 16 16"><path d="M5.5,2.5 h9 v8 h-9z" fill="#f0f4f8" stroke="#2a3a60" stroke-width="1.2"/><path d="M2,4 v10 h10" fill="none" stroke="#2a4a80" stroke-width="1.6"/></svg>
<div style="left:462.5px;top:78px;width:1px;height:15px;background:#8c8880"></div>
<div style="left:463.5px;top:78px;width:1px;height:15px;background:#fff"></div>
<div style="left:467.8px;top:78px;width:138.1px;height:16px;background:#d4d0c8;border-top:1px solid #8a8680;border-left:1px solid #8a8680;border-right:1px solid #fff;border-bottom:1px solid #fff;box-sizing:border-box"></div>
<div style="left:468.8px;top:79px;width:136.1px;height:14px;border:1px solid #55524c;box-sizing:border-box"></div>
<div style="left:592.9px;top:80px;width:11px;height:12px;background:#d4d0c8;border-top:1px solid #fff;border-left:1px solid #fff;border-right:1px solid #55524c;border-bottom:2px solid #55524c;box-sizing:border-box"></div>
<svg style="left:595.9px;top:85px" width="5" height="3"><path d="M0,0 L5,0 L2.5,3z" fill="#8a8a8a"/></svg>
<div class="t" style="left:490.60px;top:82.77px;font-size:9.60px;color:#fff;font-weight:normal;font-family:'Liberation Sans',sans-serif;transform:scaleX(0.8401);transform-origin:0 0;">Top</div>
<div class="t" style="left:490.00px;top:82.17px;font-size:9.60px;color:#8c8984;font-weight:normal;font-family:'Liberation Sans',sans-serif;transform:scaleX(0.8401);transform-origin:0 0;">Top</div>
<svg style="position:absolute;left:471.8px;top:77.9px;overflow:visible" width="15.2" height="15.2" viewBox="0 0 16 16"><path d="M2,6 l4,-3 h8 v8 l-4,3 h-8z" fill="#a8c0d8" stroke="#506880" stroke-width="0.8"/><path d="M2,6 h8 v8 M10,6 l4,-3" fill="none" stroke="#e8f0f8" stroke-width="0.8"/></svg>
<div style="left:609.5px;top:75px;width:1px;height:21px;background:#8c8880"></div>
<div style="left:610.5px;top:75px;width:1px;height:21px;background:#fff"></div>
<div style="left:611px;top:75px;width:413px;height:22px;background:#d4d0c8"></div>
<div style="left:4px;top:98px;width:1px;height:19px;background:#fff"></div>
<div style="left:7px;top:98px;width:1px;height:19px;background:#8c8880"></div>
<div style="left:8px;top:98px;width:1px;height:19px;background:#fff"></div>
<div style="left:10px;top:98px;width:1px;height:19px;background:#8c8880"></div>
<svg style="position:absolute;left:14.9px;top:100.0px;overflow:visible" width="16.0" height="16.0" viewBox="0 0 16 16"><path d="M1.5,1.5 h13 v9 h-13z" fill="#fff" stroke="#000" stroke-width="1.2"/><path d="M8,3 l-5,11 h10z" fill="#fff" stroke="#000" stroke-width="1.4"/></svg>
<svg style="position:absolute;left:38.2px;top:100.0px;overflow:visible" width="16.0" height="16.0" viewBox="0 0 16 16"><path d="M3.5,7.5 h7 v7 h-7z M3.5,7.5 l3,-3 h7 v7 l-3,3 M10.5,7.5 l3,-3" fill="#fff" stroke="#202020" stroke-width="1.1"/></svg>
<svg style="position:absolute;left:56.8px;top:100.0px;overflow:visible" width="16.0" height="16.0" viewBox="0 0 16 16"><path d="M2,5 l6,-3 l6,3 v7 l-6,3 l-6,-3z" fill="#fff" stroke="#202020" stroke-width="1.1"/><path d="M2,5 l6,3 l6,-3 M8,8 v7" fill="none" stroke="#202020" stroke-width="1.1"/></svg>
<svg style="position:absolute;left:74.5px;top:100.0px;overflow:visible" width="16.0" height="16.0" viewBox="0 0 16 16"><circle cx="8" cy="8" r="6.5" fill="#4a78b0" stroke="#2a3a60" stroke-width="0.6"/><path d="M4,4 l8,8 M12,4 l-8,8" fill="none" stroke="#c8d8f0" stroke-width="1.2"/></svg>
<svg style="position:absolute;left:93.6px;top:100.0px;overflow:visible" width="16.0" height="16.0" viewBox="0 0 16 16"><circle cx="8" cy="8" r="6.5" fill="url(#gOrange)"/></svg>
<svg style="position:absolute;left:117.7px;top:100.0px;overflow:visible" width="16.0" height="16.0" viewBox="0 0 16 16"><circle cx="6" cy="8" r="5" fill="#8aa8c8" stroke="#3a5a80"/><path d="M8.5,3.5 h6 v10 h-6z" fill="#e8f0f8" stroke="#3a5a80" stroke-width="1"/><path d="M10,7 h3 M10,10 h3" fill="none" stroke="#3a5a80" stroke-width="1"/></svg>
<div style="left:113px;top:100px;width:1px;height:15px;background:#8c8880"></div>
<div style="left:114px;top:100px;width:1px;height:15px;background:#fff"></div>
<div style="left:34px;top:100px;width:1px;height:15px;background:#8c8880"></div>
<div style="left:35px;top:100px;width:1px;height:15px;background:#fff"></div>
<div style="left:137px;top:97px;width:1px;height:21px;background:#8c8880"></div>
<div style="left:138px;top:97px;width:1px;height:21px;background:#fff"></div>
<div style="left:140px;top:98px;width:1px;height:19px;background:#fff"></div>
<div style="left:143px;top:98px;width:1px;height:19px;background:#8c8880"></div>
<div style="left:144px;top:98px;width:1px;height:19px;background:#fff"></div>
<div style="left:146px;top:98px;width:1px;height:19px;background:#8c8880"></div>
<svg style="position:absolute;left:149.4px;top:100.0px;overflow:visible" width="16.0" height="16.0" viewBox="0 0 16 16"><path d="M3.5,2.5 h10 v8 h-10z" fill="#f0f4f8" stroke="#303a50" stroke-width="1.1"/><path d="M1.5,6.5 h8 v8 h-8z" fill="#e0e8f0" stroke="#303a50" stroke-width="1.1"/><path d="M3,9 h5" fill="none" stroke="#303a50" stroke-width="1"/></svg>
<svg style="position:absolute;left:172.3px;top:100.0px;overflow:visible" width="16.0" height="16.0" viewBox="0 0 16 16"><path d="M2,6 l4,-3 h8 v8 l-4,3 h-8z" fill="#dde8f4" stroke="#4a6a90" stroke-width="0.8"/><path d="M2,6 l4,-3 h8 l-4,3z" fill="#3a6aa8" stroke="none" stroke-width="1"/><path d="M10,6 v8 M10,6 l4,-3" fill="none" stroke="#8aa0c0" stroke-width="0.8"/></svg>
<svg style="position:absolute;left:190.6px;top:100.0px;overflow:visible" width="16.0" height="16.0" viewBox="0 0 16 16"><path d="M2,6 l4,-3 h8 v8 l-4,3 h-8z" fill="#dde8f4" stroke="#4a6a90" stroke-width="0.8"/><path d="M2,14 l4,-3 h8 l-4,3z" fill="#3a6aa8" stroke="none" stroke-width="1"/></svg>
<svg style="position:absolute;left:209.0px;top:100.0px;overflow:visible" width="16.0" height="16.0" viewBox="0 0 16 16"><path d="M2,6 l4,-3 h8 v8 l-4,3 h-8z" fill="#dde8f4" stroke="#4a6a90" stroke-width="0.8"/><path d="M2,6 l4,-3 v8 l-4,3z" fill="#3a6aa8" stroke="none" stroke-width="1"/></svg>
<svg style="position:absolute;left:227.6px;top:100.0px;overflow:visible" width="16.0" height="16.0" viewBox="0 0 16 16"><path d="M2,6 l4,-3 h8 v8 l-4,3 h-8z" fill="#dde8f4" stroke="#4a6a90" stroke-width="0.8"/><path d="M10,6 l4,-3 v8 l-4,3z" fill="#3a6aa8" stroke="none" stroke-width="1"/></svg>
<svg style="position:absolute;left:246.0px;top:100.0px;overflow:visible" width="16.0" height="16.0" viewBox="0 0 16 16"><path d="M2,6 l4,-3 h8 v8 l-4,3 h-8z" fill="#dde8f4" stroke="#4a6a90" stroke-width="0.8"/><path d="M2,6 h8 v8 h-8z" fill="#2a5a98" stroke="none" stroke-width="1"/></svg>
<svg style="position:absolute;left:264.4px;top:100.0px;overflow:visible" width="16.0" height="16.0" viewBox="0 0 16 16"><path d="M2,6 l4,-3 h8 v8 l-4,3 h-8z" fill="#2a5a98" stroke="#2a4a80" stroke-width="0.8"/><path d="M2,6 h8 v8 h-8z" fill="#dde8f4" stroke="#4a6a90" stroke-width="0.8"/></svg>
<svg style="position:absolute;left:287.2px;top:100.0px;overflow:visible" width="16.0" height="16.0" viewBox="0 0 16 16"><path d="M8,1 l6,3.5 v7 l-6,3.5 l-6,-3.5 v-7z" fill="#e8f0f8" stroke="#3a5a88" stroke-width="1"/><path d="M2.5,5 l5.5,3 v6.5 l-5.5,-3z" fill="#3a6aa8" stroke="none" stroke-width="1"/><path d="M8,8 l6,-3.5" fill="none" stroke="#3a5a88" stroke-width="0.8"/></svg>
<svg style="position:absolute;left:306.3px;top:100.0px;overflow:visible" width="16.0" height="16.0" viewBox="0 0 16 16"><path d="M8,1 l6,3.5 v7 l-6,3.5 l-6,-3.5 v-7z" fill="#e8f0f8" stroke="#3a5a88" stroke-width="1"/><path d="M13.5,5 l-5.5,3 v6.5 l5.5,-3z" fill="#8ab0d8" stroke="none" stroke-width="1"/><path d="M2,4.5 l6,3.5" fill="none" stroke="#3a5a88" stroke-width="0.8"/></svg>
<svg style="position:absolute;left:325.0px;top:100.0px;overflow:visible" width="16.0" height="16.0" viewBox="0 0 16 16"><path d="M8,1 l6,3.5 v7 l-6,3.5 l-6,-3.5 v-7z" fill="#e8f0f8" stroke="#3a5a88" stroke-width="1"/><path d="M7.5,1.5 v6.5 l-5,3 v-6.5z" fill="#3a6aa8" stroke="none" stroke-width="1"/></svg>
<svg style="position:absolute;left:342.4px;top:100.0px;overflow:visible" width="16.0" height="16.0" viewBox="0 0 16 16"><path d="M8,1 l6,3.5 v7 l-6,3.5 l-6,-3.5 v-7z" fill="#e8f0f8" stroke="#3a5a88" stroke-width="1"/><path d="M8.5,1.5 l5,3 v6.5 l-5,-3z" fill="#3a6aa8" stroke="none" stroke-width="1"/></svg>
<svg style="position:absolute;left:366.6px;top:100.0px;overflow:visible" width="16.0" height="16.0" viewBox="0 0 16 16"><path d="M1.5,6.5 h13 v7 h-13z" fill="#202830" stroke="#000" stroke-width="1"/><path d="M3,4 h4 v3 h-4z" fill="#404850" stroke="none" stroke-width="1"/><circle cx="10" cy="10" r="2.3" fill="#d0d8e0"/></svg>
<svg style="position:absolute;left:389.4px;top:100.0px;overflow:visible" width="16.0" height="16.0" viewBox="0 0 16 16"><circle cx="8" cy="8" r="6" fill="#f4f6f8" stroke="#a0a8b8" stroke-width="1"/><path d="M5,8 l4,-3 v6z" fill="#5a7aa8" stroke="none" stroke-width="1"/></svg>
<div style="left:168.9px;top:100px;width:1px;height:15px;background:#8c8880"></div>
<div style="left:169.9px;top:100px;width:1px;height:15px;background:#fff"></div>
<div style="left:284.3px;top:100px;width:1px;height:15px;background:#8c8880"></div>
<div style="left:285.3px;top:100px;width:1px;height:15px;background:#fff"></div>
<div style="left:362px;top:100px;width:1px;height:15px;background:#8c8880"></div>
<div style="left:363px;top:100px;width:1px;height:15px;background:#fff"></div>
<div style="left:386.6px;top:100px;width:1px;height:15px;background:#8c8880"></div>
<div style="left:387.6px;top:100px;width:1px;height:15px;background:#fff"></div>
<div style="left:409px;top:100px;width:108.3px;height:17px;background:#d4d0c8;border-top:1px solid #8a8680;border-left:1px solid #8a8680;border-right:1px solid #fff;border-bottom:1px solid #fff;box-sizing:border-box"></div>
<div style="left:410px;top:101px;width:106.3px;height:15px;border:1px solid #55524c;box-sizing:border-box"></div>
<div style="left:504.3px;top:102px;width:11px;height:13px;background:#d4d0c8;border-top:1px solid #fff;border-left:1px solid #fff;border-right:1px solid #55524c;border-bottom:2px solid #55524c;box-sizing:border-box"></div>
<svg style="left:507.3px;top:107.5px" width="5" height="3"><path d="M0,0 L5,0 L2.5,3z" fill="#8a8a8a"/></svg>
<div style="left:522.5px;top:97px;width:1px;height:21px;background:#8c8880"></div>
<div style="left:523.5px;top:97px;width:1px;height:21px;background:#fff"></div>
<div style="left:525px;top:98px;width:1px;height:19px;background:#fff"></div>
<div style="left:528px;top:98px;width:1px;height:19px;background:#8c8880"></div>
<div style="left:529px;top:98px;width:1px;height:19px;background:#fff"></div>
<div style="left:531px;top:98px;width:1px;height:19px;background:#8c8880"></div>
<svg style="position:absolute;left:534.6px;top:100.0px;overflow:visible" width="16.0" height="16.0" viewBox="0 0 16 16"><ellipse cx="5.8" cy="8" rx="4.5" ry="4" fill="#d8e4f0" stroke="#4a6a88" stroke-width="1.5"/><ellipse cx="10.2" cy="8" rx="4.5" ry="4" fill="none" stroke="#4a6a88" stroke-width="1.5"/></svg>
<svg style="position:absolute;left:552.7px;top:100.0px;overflow:visible" width="16.0" height="16.0" viewBox="0 0 16 16"><ellipse cx="5.8" cy="8" rx="4.5" ry="4" fill="#d8e4f0" stroke="#4a6a88" stroke-width="1.5"/><ellipse cx="10.2" cy="8" rx="4.5" ry="4" fill="none" stroke="#4a6a88" stroke-width="1.5"/></svg>
<svg style="position:absolute;left:570.8px;top:100.0px;overflow:visible" width="16.0" height="16.0" viewBox="0 0 16 16"><ellipse cx="5.8" cy="8" rx="4.5" ry="4" fill="#d8e4f0" stroke="#4a6a88" stroke-width="1.5"/><ellipse cx="10.2" cy="8" rx="4.5" ry="4" fill="none" stroke="#4a6a88" stroke-width="1.5"/></svg>
<svg style="position:absolute;left:595.0px;top:100.0px;overflow:visible" width="16.0" height="16.0" viewBox="0 0 16 16"><path d="M2.5,5.5 h7 v9 h-7z M2.5,5.5 l3,-3 h7 v9 l-3,3 M9.5,5.5 l3,-3" fill="#fff" stroke="#101010" stroke-width="1.1"/><path d="M14,2 v6" fill="none" stroke="#000" stroke-width="1.2"/></svg>
<svg style="position:absolute;left:612.5px;top:100.0px;overflow:visible" width="16.0" height="16.0" viewBox="0 0 16 16"><path d="M1.5,9.5 h6 v5 h-6z M1.5,9.5 l2,-2 h6 v5 l-2,2" fill="#fff" stroke="#202020" stroke-width="1"/><path d="M11,1 v6 M8,4 h6" fill="none" stroke="#202020" stroke-width="1.2"/></svg>
<svg style="position:absolute;left:631.0px;top:100.0px;overflow:visible" width="16.0" height="16.0" viewBox="0 0 16 16"><path d="M2.5,5.5 h9 v9 h-9z" fill="#c8d8e8" stroke="#1a2a40" stroke-width="1.2"/><path d="M2.5,5.5 l3,-3 h9 v9 l-3,3" fill="#8aa8c8" stroke="#1a2a40" stroke-width="1.2"/></svg>
<svg style="position:absolute;left:649.7px;top:100.0px;overflow:visible" width="16.0" height="16.0" viewBox="0 0 16 16"><path d="M2.5,5.5 h9 v9 h-9z M2.5,5.5 l3,-3 h9 v9 l-3,3 M11.5,5.5 l3,-3" fill="#f4eef0" stroke="#202020" stroke-width="1.1"/><path d="M4,7 l6,6 M10,7 l-6,6" fill="none" stroke="#c04050" stroke-width="1.2"/></svg>
<svg style="position:absolute;left:667.6px;top:100.0px;overflow:visible" width="16.0" height="16.0" viewBox="0 0 16 16"><path d="M2,8 q0,-6 6,-6 q6,0 6,6" fill="none" stroke="#3a5a88" stroke-width="1.6"/><path d="M4.5,8.5 h7 v6 h-7z" fill="#e0e8f0" stroke="#303a50" stroke-width="1"/></svg>
<svg style="position:absolute;left:686.3px;top:100.0px;overflow:visible" width="16.0" height="16.0" viewBox="0 0 16 16"><path d="M2,13 l4,-9 l6,3 v7z" fill="#f0f0f0" stroke="#202020" stroke-width="1.1"/><path d="M10,2 l4,4" fill="none" stroke="#303030" stroke-width="1.4"/></svg>
<svg style="position:absolute;left:704.8px;top:100.0px;overflow:visible" width="16.0" height="16.0" viewBox="0 0 16 16"><path d="M1.5,7.5 h7 v7 h-7z" fill="#7a9ac0" stroke="#1a2a40" stroke-width="1"/><path d="M6.5,2.5 h7 v7 h-7z" fill="#a8c0dc" stroke="#1a2a40" stroke-width="1"/></svg>
<svg style="position:absolute;left:723.0px;top:100.0px;overflow:visible" width="16.0" height="16.0" viewBox="0 0 16 16"><path d="M1.5,3.5 h3 v10 h-3z" fill="#303030" stroke="none" stroke-width="1"/><path d="M6.5,3.5 h8 v8 h-8z" fill="#80c0a0" stroke="#204030" stroke-width="1"/></svg>
<svg style="position:absolute;left:746.4px;top:100.0px;overflow:visible" width="16.0" height="16.0" viewBox="0 0 16 16"><path d="M1.5,6.5 h9 v8 h-9z" fill="#90b8e0" stroke="#1a2a50" stroke-width="1"/><path d="M1.5,6.5 l3,-3 h9 v8 l-3,3" fill="none" stroke="#1a2a50" stroke-width="1"/><path d="M1,2 l2,-1 v6" fill="none" stroke="#202020" stroke-width="1"/></svg>
<svg style="position:absolute;left:764.9px;top:100.0px;overflow:visible" width="16.0" height="16.0" viewBox="0 0 16 16"><path d="M1.5,4.5 h7 v7 h-7z" fill="#f8f0e8" stroke="#403030" stroke-width="0.8"/><path d="M9,3 h5 M9,6 h5 M9,9 h5" fill="none" stroke="#a04030" stroke-width="1.2"/><path d="M1,13 h6" fill="none" stroke="#303030" stroke-width="1"/></svg>
<svg style="position:absolute;left:788.3px;top:100.0px;overflow:visible" width="16.0" height="16.0" viewBox="0 0 16 16"><path d="M3,4 l7,-2 v8" fill="none" stroke="#a0b0c0" stroke-width="1"/><path d="M7.5,5.5 v8 h6" fill="none" stroke="#202020" stroke-width="1.2"/><path d="M9,8 h4" fill="none" stroke="#202020" stroke-width="1"/></svg>
<svg style="position:absolute;left:806.5px;top:100.0px;overflow:visible" width="16.0" height="16.0" viewBox="0 0 16 16"><path d="M2.5,6.5 h10 v8 h-10z" fill="#c0d8f0" stroke="#405070" stroke-width="0.8"/><path d="M8,1 l4,8 h-6z" fill="#f0c020" stroke="#806000" stroke-width="0.8"/></svg>
<svg style="position:absolute;left:824.3px;top:100.0px;overflow:visible" width="16.0" height="16.0" viewBox="0 0 16 16"><path d="M2.5,3.5 h3 v10 h-3z" fill="#1a2a60" stroke="none" stroke-width="1"/><path d="M7,3 h3 v10 h-3z" fill="#e8eef8" stroke="#1a2a60" stroke-width="0.8"/><path d="M11,3.5 h3 v10 h-3z" fill="#1a2a60" stroke="none" stroke-width="1"/></svg>
<svg style="position:absolute;left:843.0px;top:100.0px;overflow:visible" width="16.0" height="16.0" viewBox="0 0 16 16"><path d="M1.5,3.5 h12 v11 h-12z" fill="#90a8c0" stroke="#1a2a40" stroke-width="1.1"/><path d="M4,6 h7 v6 h-7z" fill="#c8dcec" stroke="#2a3a50" stroke-width="0.8"/></svg>
<svg style="position:absolute;left:861.0px;top:100.0px;overflow:visible" width="16.0" height="16.0" viewBox="0 0 16 16"><path d="M3,9 l5,-6 h6 v6 l-5,6 h-6z" fill="#b8d0e8" stroke="#2a4a70" stroke-width="1"/><path d="M3,10 l3,3 l6,-7" fill="none" stroke="#208050" stroke-width="2"/></svg>
<div style="left:587.8px;top:100px;width:1px;height:15px;background:#8c8880"></div>
<div style="left:588.8px;top:100px;width:1px;height:15px;background:#fff"></div>
<div style="left:743.6px;top:100px;width:1px;height:15px;background:#8c8880"></div>
<div style="left:744.6px;top:100px;width:1px;height:15px;background:#fff"></div>
<div style="left:785.2px;top:100px;width:1px;height:15px;background:#8c8880"></div>
<div style="left:786.2px;top:100px;width:1px;height:15px;background:#fff"></div>
<div style="left:881px;top:97px;width:1px;height:21px;background:#8c8880"></div>
<div style="left:882px;top:97px;width:1px;height:21px;background:#fff"></div>
<div style="left:883px;top:97px;width:141px;height:22px;background:#d4d0c8"></div>
<div style="left:0px;top:119px;width:21px;height:1px;background:#d4d0c8"></div>
<div style="left:0px;top:120px;width:20px;height:348px;background:#e4e2dc;border-right:1px solid #8a8680;border-bottom:1px solid #8a8680;border-top:1px solid #fff;box-sizing:border-box"></div>
<div style="left:20px;top:120px;width:1px;height:416px;background:#f4f2ee"></div>
<div style="left:3px;top:121px;width:14px;height:1px;background:#fff"></div>
<div style="left:3px;top:123px;width:14px;height:1px;background:#8c8880"></div>
<div style="left:3px;top:124px;width:14px;height:1px;background:#fff"></div>
<div style="left:3px;top:126px;width:14px;height:1px;background:#8c8880"></div>
<svg style="position:absolute;left:2.0px;top:129.7px;overflow:visible" width="16.0" height="16.0" viewBox="0 0 16 16"><path d="M3,13 L13,3" fill="none" stroke="#3a4a60" stroke-width="1.5"/></svg>
<svg style="position:absolute;left:2.0px;top:147.0px;overflow:visible" width="16.0" height="16.0" viewBox="0 0 16 16"><path d="M2,14 L14,2" fill="none" stroke="#1a1a1a" stroke-width="1.6"/><path d="M2,14 h2 M12,2 h2" fill="none" stroke="#1a1a1a" stroke-width="1.2"/></svg>
<svg style="position:absolute;left:2.0px;top:164.5px;overflow:visible" width="16.0" height="16.0" viewBox="0 0 16 16"><path d="M2,11 h8 q4,-1 3,-4 q-1,-2 -3,0" fill="none" stroke="#2a3a50" stroke-width="1.5"/></svg>
<svg style="position:absolute;left:2.0px;top:182.0px;overflow:visible" width="16.0" height="16.0" viewBox="0 0 16 16"><path d="M8,2 l6,4.5 l-2.3,7 h-7.4 l-2.3,-7z" fill="#e8eef4" stroke="#2a3a50" stroke-width="1.4"/></svg>
<svg style="position:absolute;left:2.0px;top:199.3px;overflow:visible" width="16.0" height="16.0" viewBox="0 0 16 16"><path d="M2.5,4.5 h11 v7 h-11z" fill="#e8eef8" stroke="#2a3a50" stroke-width="1.6"/></svg>
<svg style="position:absolute;left:2.0px;top:217.8px;overflow:visible" width="16.0" height="16.0" viewBox="0 0 16 16"><path d="M3,14 C3,8 8,3 14,3" fill="none" stroke="#2a3a50" stroke-width="1.6"/></svg>
<svg style="position:absolute;left:2.0px;top:235.2px;overflow:visible" width="16.0" height="16.0" viewBox="0 0 16 16"><circle cx="8" cy="8" r="5.5" fill="#e4ecf4" stroke="#2a3a50" stroke-width="1.5"/><path d="M8,8 l3,-3" fill="none" stroke="#2a3a50" stroke-width="1.2"/></svg>
<svg style="position:absolute;left:2.0px;top:252.6px;overflow:visible" width="16.0" height="16.0" viewBox="0 0 16 16"><path d="M4,4 q2,-3 4,0 q3,-2 4,2 q3,2 0,5 q0,3 -3,2 q-2,3 -5,0 q-3,-1 -1,-4 q-3,-3 1,-5z" fill="#e8eef4" stroke="#2a3a50" stroke-width="1.3"/></svg>
<svg style="position:absolute;left:2.0px;top:270.0px;overflow:visible" width="16.0" height="16.0" viewBox="0 0 16 16"><path d="M2,14 C5,4 8,14 14,3" fill="none" stroke="#2a3a50" stroke-width="1.4"/></svg>
<svg style="position:absolute;left:2.0px;top:287.7px;overflow:visible" width="16.0" height="16.0" viewBox="0 0 16 16"><ellipse cx="8" cy="8" rx="6" ry="3.8" fill="#e8eef4" stroke="#2a3a50" stroke-width="1.6"/></svg>
<svg style="position:absolute;left:2.0px;top:305.3px;overflow:visible" width="16.0" height="16.0" viewBox="0 0 16 16"><path d="M3,10 C1,5 12,2 13,7 C13,10 9,12 6,11" fill="none" stroke="#2a3a50" stroke-width="1.6"/><path d="M4,11 l-1,-3" fill="none" stroke="#2a3a50" stroke-width="1"/></svg>
<svg style="position:absolute;left:2.0px;top:322.8px;overflow:visible" width="16.0" height="16.0" viewBox="0 0 16 16"><path d="M2.5,5.5 h7 v7 h-7z" fill="#c8e0c8" stroke="#203828" stroke-width="1.1"/><circle cx="9" cy="11" r="3" fill="#e8f0e8" stroke="#203828" stroke-width="1.1"/><path d="M8,2 q5,0 5,5" fill="none" stroke="#203828" stroke-width="1"/><path d="M13,12 l1,2 h-2z" fill="#000" stroke="#000" stroke-width="1"/></svg>
<svg style="position:absolute;left:2.0px;top:341.7px;overflow:visible" width="16.0" height="16.0" viewBox="0 0 16 16"><path d="M2.5,4.5 h7 v6 h-7z" fill="#c8e0c8" stroke="#203828" stroke-width="1.1"/><circle cx="10" cy="11" r="3" fill="#e8f0e8" stroke="#203828" stroke-width="1.1"/></svg>
<svg style="position:absolute;left:2.0px;top:358.3px;overflow:visible" width="16.0" height="16.0" viewBox="0 0 16 16"><path d="M7,9 h2 v2 h-2z" fill="#1a1a1a" stroke="none" stroke-width="1"/></svg>
<svg style="position:absolute;left:2.0px;top:375.2px;overflow:visible" width="16.0" height="16.0" viewBox="0 0 16 16"><path d="M1.5,3.5 h13 v10 h-13z" fill="#c8d8e8" stroke="#2a4a78" stroke-width="1.1"/><path d="M2,12 l9,-9 M5,13 l9,-9 M2,5 l8,8" fill="none" stroke="#5a7aa8" stroke-width="0.8"/></svg>
<svg style="position:absolute;left:2.0px;top:394.1px;overflow:visible" width="16.0" height="16.0" viewBox="0 0 16 16"><path d="M1.5,3.5 h13 v10 h-13z" fill="#404850" stroke="#101010" stroke-width="1.2"/><path d="M4,5 h8 v7 h-8z" fill="#8a9aa8" stroke="none" stroke-width="1"/></svg>
<svg style="position:absolute;left:2.0px;top:411.6px;overflow:visible" width="16.0" height="16.0" viewBox="0 0 16 16"><path d="M2.5,3.5 h8 l4,5 v5 h-12z" fill="#e8f0f8" stroke="#2a4a78" stroke-width="1.3"/><circle cx="7" cy="9" r="2.5" fill="none" stroke="#2a4a78"/></svg>
<svg style="position:absolute;left:2.0px;top:427.6px;overflow:visible" width="16.0" height="16.0" viewBox="0 0 16 16"><path d="M1.5,3.5 h13 v10 h-13z" fill="#e0e8f4" stroke="#2a4a78" stroke-width="1.1"/><path d="M1.5,6.5 h13 M1.5,9.5 h13 M5.5,3.5 v10 M9.5,3.5 v10" fill="none" stroke="#4a6a98" stroke-width="0.9"/><path d="M1.5,3.5 h13 v3 h-13z" fill="#5a7ab0" stroke="none" stroke-width="1"/></svg>
<svg style="position:absolute;left:2.0px;top:446.6px;overflow:visible" width="16.0" height="16.0" viewBox="0 0 16 16"><text x="8" y="14" font-family="Liberation Sans" font-size="14" fill="#111" text-anchor="middle">A</text></svg>
<div style="left:21px;top:120px;width:968px;height:416px;background:#c0c0c0;border-top:2px solid #4a4a4a;border-left:2px solid #4a4a4a;box-sizing:border-box"></div>
<svg style="left:0;top:0" width="1024" height="640"><polygon points="340.6,309.5 215.4,380.5 215.4,286.0 340.6,215.0" fill="#575566" stroke="#111" stroke-width="1.25" stroke-linejoin="round" />
<polygon points="340.6,309.5 483.6,390.6 483.6,296.1 340.6,215.0" fill="#7b7a80" stroke="#111" stroke-width="1.25" stroke-linejoin="round" />
<polygon points="422.1,355.7 296.9,426.7 296.9,332.2 422.1,261.2" fill="#575566" stroke="none" />
<polygon points="403.1,250.4 422.1,261.2 296.9,332.2 277.9,321.4" fill="#88878b" stroke="#111" stroke-width="1.25" stroke-linejoin="round" />
<line x1="422.1" y1="261.2" x2="422.1" y2="355.7" stroke="#1a1a1a" stroke-width="1.1" stroke-dasharray="2.5,1.2"/>
<ellipse cx="350.0" cy="291.3" rx="6.0" ry="3.5" fill="#7f7e85" stroke="#151515" stroke-width="1.4"/>
<path d="M340.0,204.0 L503.0,296.4 L359.0,378.1 L196.0,285.6 Z M340.6,215.0 L483.6,296.1 L358.4,367.1 L215.4,286.0 Z" fill="#88878b" fill-rule="evenodd" stroke="#111" stroke-width="1.25" stroke-linejoin="round"/>
<polygon points="196.0,380.1 359.0,472.6 359.0,378.1 196.0,285.6" fill="#7b7a80" stroke="#111" stroke-width="1.25" stroke-linejoin="round" />
<polygon points="503.0,390.9 359.0,472.6 359.0,378.1 503.0,296.4" fill="#575566" stroke="#111" stroke-width="1.25" stroke-linejoin="round" />
<polygon points="659.8,169.4 723.2,205.3 596.9,276.9 533.5,241.0" fill="#88878b" stroke="#111" stroke-width="1.25" stroke-linejoin="round" />
<polygon points="533.5,252.3 596.9,288.2 596.9,276.9 571.0,262.3 571.0,251.8 561.5,246.4 561.5,256.9 533.5,241.0" fill="#7b7a80" stroke="#111" stroke-width="1.25" stroke-linejoin="round" />
<polygon points="723.2,216.6 596.9,288.2 596.9,276.9 723.2,205.3" fill="#575566" stroke="#111" stroke-width="1.25" stroke-linejoin="round" />
<polygon points="687.8,174.8 697.3,180.2 571.0,251.8 561.5,246.4" fill="#88878b" stroke="#111" stroke-width="1.25" stroke-linejoin="round" />
<polygon points="571.0,262.3 697.3,190.7 697.3,180.2 642.0,211.5 642.0,159.8 624.0,170.0 624.0,221.7 571.0,251.8" fill="#575566" stroke="#111" stroke-width="1.25" stroke-linejoin="round" />
<polygon points="740.5,216.6 803.9,252.6 677.6,324.2 614.2,288.2" fill="#88878b" stroke="#111" stroke-width="1.25" stroke-linejoin="round" />
<polygon points="614.2,299.5 677.6,335.5 677.6,324.2 651.7,309.5 651.7,299.0 642.2,293.6 642.2,304.1 614.2,288.2" fill="#7b7a80" stroke="#111" stroke-width="1.25" stroke-linejoin="round" />
<polygon points="803.9,263.9 677.6,335.5 677.6,324.2 803.9,252.6" fill="#575566" stroke="#111" stroke-width="1.25" stroke-linejoin="round" />
<polygon points="768.5,222.0 778.0,227.4 651.7,299.0 642.2,293.6" fill="#88878b" stroke="#111" stroke-width="1.25" stroke-linejoin="round" />
<polygon points="651.7,309.5 778.0,237.9 778.0,227.4 724.0,258.0 724.0,194.2 706.0,204.4 706.0,268.2 651.7,299.0" fill="#575566" stroke="#111" stroke-width="1.25" stroke-linejoin="round" />
<polygon points="614.5,216.3 624.0,221.7 624.0,170.0 696.5,211.1 696.5,262.8 706.0,268.2 706.0,204.4 614.5,152.5" fill="#7b7a80" stroke="#111" stroke-width="1.25" stroke-linejoin="round" />
<polygon points="632.5,142.3 724.0,194.2 706.0,204.4 614.5,152.5" fill="#88878b" stroke="#111" stroke-width="1.25" stroke-linejoin="round" />
<ellipse cx="669.2" cy="173.4" rx="6.0" ry="3.8" fill="#7f7e85" stroke="#151515" stroke-width="1.4"/></svg>
<div style="left:497.5px;top:418.5px;width:5px;height:5px;border:1px solid #40a040;box-sizing:border-box"></div>
<svg style="left:45px;top:460px" width="50" height="60">
<text x="12.5" y="12" font-family="Liberation Sans" font-weight="bold" font-size="8.5" fill="#5a9ad8">Z</text>
<text x="34" y="24" font-family="Liberation Sans" font-size="8" fill="#70b870">Y</text>
<text x="34" y="47" font-family="Liberation Sans" font-size="8.5" fill="#e06060">X</text>
<path d="M10.5,44 L10.5,26" stroke="#1f4f90" stroke-width="2.6"/>
<path d="M6.5,28 L10.5,16 L14.5,28z" fill="#2f76c8"/>
<path d="M10.5,43.5 L24,36" stroke="#30b030" stroke-width="2.4"/>
<path d="M20,35 L33,29.5 L27,39.5z" fill="#18a018"/>
<path d="M10.5,43.5 L24,50.5" stroke="#b02020" stroke-width="2.6"/>
<path d="M21,46 L33,54 L19.5,53.5z" fill="#d82828"/>
</svg>
<div style="left:989px;top:120px;width:14px;height:416px;background:#ebe9e3"></div>
<div style="left:989px;top:121px;width:12px;height:12px;background:#d4d0c8;border-top:1px solid #fff;border-left:1px solid #fff;border-right:1px solid #404040;border-bottom:1px solid #404040;box-sizing:border-box"></div>
<svg style="left:992px;top:125px" width="7" height="4"><path d="M0,4 L7,4 L3.5,0z" fill="#000"/></svg>
<div style="left:989px;top:322px;width:12px;height:12px;background:#d4d0c8;border-top:1px solid #fff;border-left:1px solid #fff;border-right:1px solid #404040;border-bottom:1px solid #404040;box-sizing:border-box"></div>
<div style="left:989px;top:523px;width:12px;height:12px;background:#d4d0c8;border-top:1px solid #fff;border-left:1px solid #fff;border-right:1px solid #404040;border-bottom:1px solid #404040;box-sizing:border-box"></div>
<svg style="left:992px;top:527px" width="7" height="4"><path d="M0,0 L7,0 L3.5,4z" fill="#000"/></svg>
<div style="left:1002px;top:120px;width:1px;height:416px;background:#fff"></div>
<div style="left:1003px;top:120px;width:21px;height:313px;background:#e4e2dc;border-left:1px solid #fff;border-top:1px solid #fff;border-right:1px solid #8c8880;border-bottom:1px solid #8c8880;box-sizing:border-box"></div>
<div style="left:1006px;top:121px;width:15px;height:1px;background:#fff"></div>
<div style="left:1006px;top:123px;width:15px;height:1px;background:#8c8880"></div>
<div style="left:1006px;top:124px;width:15px;height:1px;background:#fff"></div>
<div style="left:1006px;top:126px;width:15px;height:1px;background:#8c8880"></div>
<svg style="position:absolute;left:1005.0px;top:130.7px;overflow:visible" width="16.0" height="16.0" viewBox="0 0 16 16"><path d="M4,12 l8,-8 l2.5,2.5 l-8,8z" fill="#e8d8a0" stroke="#806848" stroke-width="1"/><path d="M4,12 l2.5,2.5 l-2,0z" fill="#c0a0a0" stroke="none" stroke-width="1"/><path d="M2,14.5 h11" fill="none" stroke="#606060" stroke-width="1"/></svg>
<svg style="position:absolute;left:1005.0px;top:147.0px;overflow:visible" width="16.0" height="16.0" viewBox="0 0 16 16"><circle cx="6" cy="5" r="3" fill="none" stroke="#2a3a50" stroke-width="1.3"/><circle cx="10" cy="11" r="3" fill="none" stroke="#2a3a50" stroke-width="1.3"/><path d="M9,5 l3,2" fill="none" stroke="#2a3a50" stroke-width="1"/></svg>
<svg style="position:absolute;left:1005.0px;top:164.5px;overflow:visible" width="16.0" height="16.0" viewBox="0 0 16 16"><path d="M6.5,3 v11 h-5z" fill="none" stroke="#2a3a50" stroke-width="1.3"/><path d="M9.5,3 v11 h5z" fill="#b8c8e0" stroke="#2a3a50" stroke-width="1.3"/><path d="M8,1 v14" fill="none" stroke="#5a6a80" stroke-width="0.9"/></svg>
<svg style="position:absolute;left:1005.0px;top:182.0px;overflow:visible" width="16.0" height="16.0" viewBox="0 0 16 16"><path d="M2,13.5 h12 v-3.5 h-2.5 v-4 q0,-3.5 -3.5,-3.5 q-3.5,0 -3.5,3.5 v4 h-2.5z" fill="#dfe8f2" stroke="#2a3a50" stroke-width="1.3"/><path d="M6.5,10 v-3 q0,-1.5 1.5,-1.5 q1.5,0 1.5,1.5 v3" fill="none" stroke="#4a70a8" stroke-width="1.1"/></svg>
<svg style="position:absolute;left:1005.0px;top:199.4px;overflow:visible" width="16.0" height="16.0" viewBox="0 0 16 16"><path d="M2.5,2.5 h4 v4 h-4z M9.5,2.5 h4 v4 h-4z M2.5,9.5 h4 v4 h-4z M9.5,9.5 h4 v4 h-4z" fill="#fff" stroke="#1a1a1a" stroke-width="1.3"/></svg>
<svg style="position:absolute;left:1005.0px;top:217.8px;overflow:visible" width="16.0" height="16.0" viewBox="0 0 16 16"><path d="M8,1 v14 M1,8 h14" fill="none" stroke="#2a4a78" stroke-width="1.6"/><path d="M8,1 l-2.5,3 h5z M8,15 l-2.5,-3 h5z M1,8 l3,-2.5 v5z M15,8 l-3,-2.5 v5z" fill="#2a4a78" stroke="none" stroke-width="1"/></svg>
<svg style="position:absolute;left:1005.0px;top:235.2px;overflow:visible" width="16.0" height="16.0" viewBox="0 0 16 16"><path d="M4,4 A5.5,5.5 0 1 0 10,2.5" fill="none" stroke="#2a3a50" stroke-width="1.8"/><path d="M2,3 h4 v4" fill="none" stroke="#2a3a50" stroke-width="1.3"/></svg>
<svg style="position:absolute;left:1005.0px;top:252.6px;overflow:visible" width="16.0" height="16.0" viewBox="0 0 16 16"><path d="M2.5,2.5 h11 v11 h-11z" fill="#e8f0f8" stroke="#2a3a50" stroke-width="1"/><path d="M2.5,8.5 h6 v5" fill="none" stroke="#2a3a50" stroke-width="1"/><path d="M5,4 v2 M11,11 v2" fill="none" stroke="#5a7090" stroke-width="0.6"/></svg>
<svg style="position:absolute;left:1005.0px;top:270.0px;overflow:visible" width="16.0" height="16.0" viewBox="0 0 16 16"><path d="M2.5,2.5 v11 h11z" fill="none" stroke="#2a3a50" stroke-width="1.3"/><path d="M6.5,2.5 h1 l6,11" fill="#e0e8f0" stroke="#2a3a50" stroke-width="1.2"/><path d="M2.5,2.5 h4" fill="none" stroke="#2a3a50" stroke-width="1.3"/></svg>
<svg style="position:absolute;left:1005.0px;top:286.4px;overflow:visible" width="16.0" height="16.0" viewBox="0 0 16 16"><path d="M2,10 l12,-4" fill="none" stroke="#3a5a88" stroke-width="1.3"/><path d="M7,2 l-2,12" fill="none" stroke="#2a3a50" stroke-width="1"/></svg>
<svg style="position:absolute;left:1005.0px;top:305.3px;overflow:visible" width="16.0" height="16.0" viewBox="0 0 16 16"><path d="M2,9 h4 M8,9 l6,-6" fill="none" stroke="#3a5a88" stroke-width="1.3"/><path d="M9,8 l4,0" fill="none" stroke="#2a3a50" stroke-width="1"/></svg>
<svg style="position:absolute;left:1005.0px;top:322.8px;overflow:visible" width="16.0" height="16.0" viewBox="0 0 16 16"><path d="M2.5,4.5 h11 v8 h-11z" fill="#e8eef8" stroke="#1a1a1a" stroke-width="1.4"/><path d="M5,4.5 v-2 M11,4.5 v-2" fill="none" stroke="#1a1a1a" stroke-width="1"/></svg>
<svg style="position:absolute;left:1005.0px;top:340.2px;overflow:visible" width="16.0" height="16.0" viewBox="0 0 16 16"><path d="M2.5,4.5 h11 v8 h-11z" fill="#e8eef8" stroke="#1a1a1a" stroke-width="1.4"/><path d="M5,4.5 v-2 M11,4.5 v-2" fill="none" stroke="#1a1a1a" stroke-width="1"/></svg>
<svg style="position:absolute;left:1005.0px;top:358.3px;overflow:visible" width="16.0" height="16.0" viewBox="0 0 16 16"><path d="M1,8 h14" fill="none" stroke="#1a1a1a" stroke-width="1.6"/><path d="M4,5 l3,3 l-3,3 M12,5 l-3,3 l3,3" fill="none" stroke="#1a1a1a" stroke-width="1.4"/></svg>
<svg style="position:absolute;left:1005.0px;top:375.2px;overflow:visible" width="16.0" height="16.0" viewBox="0 0 16 16"><path d="M3,14 v-8 l3,-3 h8" fill="none" stroke="#2a3a50" stroke-width="1.4"/><path d="M6,5 l2,-1" fill="none" stroke="#8aa0c0" stroke-width="1"/></svg>
<svg style="position:absolute;left:1005.0px;top:392.6px;overflow:visible" width="16.0" height="16.0" viewBox="0 0 16 16"><path d="M3,14 v-6 q0,-5 5,-5 h6" fill="none" stroke="#2a3a50" stroke-width="1.4"/></svg>
<svg style="position:absolute;left:1005.0px;top:411.6px;overflow:visible" width="16.0" height="16.0" viewBox="0 0 16 16"><path d="M3,13 l4,-6 l2,3 l4,-7 l-1,6 l2,1 l-6,4z" fill="#e06030" stroke="#803020" stroke-width="0.8"/><path d="M5,4 l3,3" fill="none" stroke="#f0c020" stroke-width="1.4"/></svg>
<div style="left:1003px;top:434px;width:21px;height:83px;background:#e4e2dc;border-left:1px solid #fff;border-top:1px solid #fff;border-right:1px solid #8c8880;border-bottom:1px solid #8c8880;box-sizing:border-box"></div>
<div style="left:1006px;top:436px;width:15px;height:1px;background:#fff"></div>
<div style="left:1006px;top:438px;width:15px;height:1px;background:#8c8880"></div>
<div style="left:1006px;top:439px;width:15px;height:1px;background:#fff"></div>
<div style="left:1006px;top:441px;width:15px;height:1px;background:#8c8880"></div>
<svg style="position:absolute;left:1005.0px;top:442.0px;overflow:visible" width="16.0" height="16.0" viewBox="0 0 16 16"><path d="M1.5,1.5 h8 v8 h-8z" fill="#7aa0d0" stroke="#3a5a80" stroke-width="1"/><path d="M5.5,5.5 h9 v9 h-9z" fill="#3a6aa8" stroke="#1a3a70" stroke-width="1"/></svg>
<svg style="position:absolute;left:1005.0px;top:459.6px;overflow:visible" width="16.0" height="16.0" viewBox="0 0 16 16"><path d="M5.5,5.5 h9 v9 h-9z" fill="#a8c4e4" stroke="#3a5a80" stroke-width="1"/><path d="M1.5,1.5 h8 v8 h-8z" fill="#3a6aa8" stroke="#1a3a70" stroke-width="1"/></svg>
<svg style="position:absolute;left:1005.0px;top:477.0px;overflow:visible" width="16.0" height="16.0" viewBox="0 0 16 16"><path d="M1.5,1.5 h9 v9 h-9z" fill="#3a6aa8" stroke="#1a3a70" stroke-width="1"/><path d="M5.5,5.5 h9 v9 h-9z" fill="#c0d8f0" stroke="#3a5a80" stroke-width="1"/></svg>
<svg style="position:absolute;left:1005.0px;top:494.5px;overflow:visible" width="16.0" height="16.0" viewBox="0 0 16 16"><path d="M5.5,5.5 h9 v9 h-9z" fill="#c0d8f0" stroke="#3a5a80" stroke-width="1"/><path d="M1.5,1.5 h9 v9 h-9z" fill="#3a6aa8" stroke="#1a3a70" stroke-width="1"/></svg>
<div style="left:23px;top:536px;width:966px;height:14px;background:#d4d0c8"></div>
<div style="left:23px;top:536px;width:47px;height:13px;background:#e6e4de"></div>
<svg style="left:110px;top:536px" width="95" height="14"><path d="M3,0 h41 l-4,12.5 h-41z M48,0 h41 l-4,12.5 h-41z" fill="#e2e0da"/></svg>
<div style="left:662px;top:536px;width:327px;height:13px;background:#ebe9e3"></div>
<div style="left:23px;top:535.5px;width:966px;height:1px;background:#505050"></div>
<div style="left:23px;top:549.5px;width:966px;height:1px;background:#fff"></div>
<svg style="left:23px;top:536px" width="180" height="14"><path d="M0.5,0 v13 M12.5,0 v13 M24.5,0 v13 M36.5,0 v13 M47.5,0 v13" stroke="#c8c4bc"/><path d="M4,3 v7" stroke="#b4b0a8" stroke-width="1.2"/><path d="M10,3 l-5,3.5 l5,3.5z" fill="#b4b0a8"/><path d="M21,3 l-5,3.5 l5,3.5z" fill="#b4b0a8"/><path d="M28,3 l5,3.5 l-5,3.5z" fill="#b4b0a8"/><path d="M39,3 l5,3.5 l-5,3.5z" fill="#b4b0a8"/><path d="M45,3 v7" stroke="#b4b0a8" stroke-width="1.2"/><path d="M48,0 h42 l-4,12.5 h-33z" fill="#000"/><path d="M129.5,12.5 l4,-12.5 M174.5,12.5 l4,-12.5" stroke="#303030" stroke-width="0.9"/><path d="M86,12.5 h89" stroke="#404040" stroke-width="1"/></svg>
<div class="t" style="left:79.60px;top:538.47px;font-size:9.60px;color:#fff;font-weight:normal;font-family:'Liberation Sans',sans-serif;transform:scaleX(0.8948);transform-origin:0 0;">Model</div>
<div class="t" style="left:116.70px;top:538.47px;font-size:9.60px;color:#101010;font-weight:normal;font-family:'Liberation Sans',sans-serif;transform:scaleX(0.8868);transform-origin:0 0;">Layout1</div>
<div class="t" style="left:160.60px;top:538.47px;font-size:9.60px;color:#101010;font-weight:normal;font-family:'Liberation Sans',sans-serif;transform:scaleX(0.8868);transform-origin:0 0;">Layout2</div>
<div style="left:663px;top:537px;width:13px;height:12px;background:#d4d0c8;border-top:1px solid #fff;border-left:1px solid #fff;border-right:1px solid #404040;border-bottom:1px solid #404040;box-sizing:border-box"></div>
<svg style="left:667px;top:540px" width="5" height="7"><path d="M4,0 L4,7 L0,3.5z" fill="#000"/></svg>
<div style="left:662px;top:537px;width:1px;height:12px;background:#808080"></div>
<div style="left:820px;top:537px;width:13px;height:12px;background:#d4d0c8;border-top:1px solid #fff;border-left:1px solid #fff;border-right:1px solid #404040;border-bottom:1px solid #404040;box-sizing:border-box"></div>
<div style="left:976px;top:537px;width:12px;height:12px;background:#d4d0c8;border-top:1px solid #fff;border-left:1px solid #fff;border-right:1px solid #404040;border-bottom:1px solid #404040;box-sizing:border-box"></div>
<svg style="left:980px;top:540px" width="5" height="7"><path d="M0,0 L0,7 L4,3.5z" fill="#000"/></svg>
<div style="left:989px;top:536px;width:14px;height:15px;background:#d4d0c8"></div>
<div style="left:0px;top:550px;width:1024px;height:1px;background:#fff"></div>
<div style="left:0px;top:553.6px;width:1024px;height:1.2px;background:#383838"></div>
<div style="left:0px;top:554.8px;width:1024px;height:1px;background:#b8b4ac"></div>
<div style="left:4px;top:561px;width:1px;height:33px;background:#fff"></div>
<div style="left:7px;top:561px;width:1px;height:33px;background:#8c8880"></div>
<div style="left:8px;top:561px;width:1px;height:33px;background:#fff"></div>
<div style="left:10px;top:561px;width:1px;height:33px;background:#8c8880"></div>
<div style="left:13px;top:562px;width:1004px;height:35px;background:#fff;border-top:1px solid #808080;box-sizing:border-box"></div>
<div style="left:13px;top:563px;width:1004px;height:1px;background:#303030"></div>
<div style="left:13px;top:563px;width:1px;height:34px;background:#404040"></div>
<div style="left:14px;top:581px;width:990px;height:1px;background:#c8c8c8"></div>
<div class="t" style="left:14.00px;top:566.75px;font-size:10.50px;color:#2a2a2a;font-weight:normal;font-family:'Liberation Mono',monospace;transform:scaleX(1.0000);transform-origin:0 0;">MOVE</div>
<div class="t" style="left:15.00px;top:585.65px;font-size:10.50px;color:#2a2a2a;font-weight:normal;font-family:'Liberation Mono',monospace;transform:scaleX(1.0009);transform-origin:0 0;">Select objects:</div>
<div style="left:1004px;top:565px;width:13px;height:8px;background:#d4d0c8;border-top:1px solid #fff;border-left:1px solid #fff;border-right:1px solid #404040;border-bottom:1px solid #404040;box-sizing:border-box"></div>
<div style="left:1004px;top:573px;width:13px;height:8px;background:#d4d0c8;border-top:1px solid #fff;border-left:1px solid #fff;border-right:1px solid #404040;border-bottom:1px solid #404040;box-sizing:border-box"></div>
<svg style="left:1008px;top:567px" width="5" height="12"><path d="M0,3 L5,3 L2.5,0z M0,9 L5,9 L2.5,12z" fill="#404040"/></svg>
<div style="left:1004px;top:581px;width:20px;height:16px;background:#d4d0c8"></div>
<div style="left:955px;top:582px;width:49px;height:15px;background:#ebe9e3"></div>
<div style="left:955px;top:583px;width:12px;height:13px;background:#d4d0c8;border-top:1px solid #fff;border-left:1px solid #fff;border-right:1px solid #404040;border-bottom:1px solid #404040;box-sizing:border-box"></div>
<div style="left:968px;top:583px;width:12px;height:13px;background:#d4d0c8;border-top:1px solid #fff;border-left:1px solid #fff;border-right:1px solid #404040;border-bottom:1px solid #404040;box-sizing:border-box"></div>
<div style="left:992px;top:583px;width:12px;height:13px;background:#d4d0c8;border-top:1px solid #fff;border-left:1px solid #fff;border-right:1px solid #404040;border-bottom:1px solid #404040;box-sizing:border-box"></div>
<svg style="left:959px;top:586px" width="5" height="7"><path d="M4,0 L4,7 L0,3.5z" fill="#000"/></svg>
<svg style="left:996px;top:586px" width="5" height="7"><path d="M0,0 L0,7 L4,3.5z" fill="#000"/></svg>
<div style="left:1017px;top:563px;width:7px;height:34px;background:#d4d0c8"></div>
<div style="left:3px;top:601px;width:143px;height:16px;background:#d4d0c8;border-top:1px solid #808080;border-left:1px solid #808080;border-right:1px solid #fff;border-bottom:1px solid #fff;box-sizing:border-box"></div>
<div class="t" style="left:6.25px;top:605.30px;font-size:9.80px;color:#101010;font-weight:normal;font-family:'Liberation Sans',sans-serif;transform:scaleX(0.8774);transform-origin:0 0;">1872.1537, 1510.7694, 0.0000</div>
<div style="left:148.8px;top:602px;width:25.5px;height:15px;background:#dddad3;border-top:1px solid #eeece8;border-left:1px solid #eeece8;border-right:1px solid #b8b4ac;border-bottom:1px solid #b8b4ac;box-sizing:border-box"></div>
<div class="t" style="left:150.50px;top:605.50px;font-size:9.80px;color:#101010;font-weight:normal;font-family:'Liberation Sans',sans-serif;transform:scaleX(0.8581);transform-origin:0 0;">SNAP</div>
<div style="left:177.8px;top:602px;width:24.6px;height:15px;background:#dddad3;border-top:1px solid #eeece8;border-left:1px solid #eeece8;border-right:1px solid #b8b4ac;border-bottom:1px solid #b8b4ac;box-sizing:border-box"></div>
<div class="t" style="left:180.00px;top:605.50px;font-size:9.80px;color:#101010;font-weight:normal;font-family:'Liberation Sans',sans-serif;transform:scaleX(0.8653);transform-origin:0 0;">GRID</div>
<div style="left:205.9px;top:602px;width:34.3px;height:15px;background:#dddad3;border-top:1px solid #eeece8;border-left:1px solid #eeece8;border-right:1px solid #b8b4ac;border-bottom:1px solid #b8b4ac;box-sizing:border-box"></div>
<div class="t" style="left:207.70px;top:605.50px;font-size:9.80px;color:#101010;font-weight:normal;font-family:'Liberation Sans',sans-serif;transform:scaleX(0.8974);transform-origin:0 0;">ORTHO</div>
<div style="left:244px;top:602px;width:32.8px;height:15px;background:#d4d0c8;border-top:1px solid #404040;border-left:1px solid #404040;border-right:1px solid #fff;border-bottom:1px solid #fff;box-sizing:border-box"></div>
<div class="t" style="left:246.30px;top:605.50px;font-size:9.80px;color:#101010;font-weight:normal;font-family:'Liberation Sans',sans-serif;transform:scaleX(0.8639);transform-origin:0 0;">POLAR</div>
<div style="left:278.9px;top:602px;width:33.4px;height:15px;background:#d4d0c8;border-top:1px solid #404040;border-left:1px solid #404040;border-right:1px solid #fff;border-bottom:1px solid #fff;box-sizing:border-box"></div>
<div class="t" style="left:280.60px;top:605.50px;font-size:9.80px;color:#101010;font-weight:normal;font-family:'Liberation Sans',sans-serif;transform:scaleX(0.8715);transform-origin:0 0;">OSNAP</div>
<div style="left:315.5px;top:602px;width:38.1px;height:15px;background:#d4d0c8;border-top:1px solid #404040;border-left:1px solid #404040;border-right:1px solid #fff;border-bottom:1px solid #fff;box-sizing:border-box"></div>
<div class="t" style="left:317.60px;top:605.50px;font-size:9.80px;color:#101010;font-weight:normal;font-family:'Liberation Sans',sans-serif;transform:scaleX(0.8595);transform-origin:0 0;">OTRACK</div>
<div style="left:357.1px;top:602px;width:26.4px;height:15px;background:#dddad3;border-top:1px solid #eeece8;border-left:1px solid #eeece8;border-right:1px solid #b8b4ac;border-bottom:1px solid #b8b4ac;box-sizing:border-box"></div>
<div class="t" style="left:358.90px;top:605.50px;font-size:9.80px;color:#101010;font-weight:normal;font-family:'Liberation Sans',sans-serif;transform:scaleX(0.8425);transform-origin:0 0;">DUCS</div>
<div style="left:387px;top:602px;width:21.1px;height:15px;background:#dddad3;border-top:1px solid #eeece8;border-left:1px solid #eeece8;border-right:1px solid #b8b4ac;border-bottom:1px solid #b8b4ac;box-sizing:border-box"></div>
<div class="t" style="left:388.80px;top:605.50px;font-size:9.80px;color:#101010;font-weight:normal;font-family:'Liberation Sans',sans-serif;transform:scaleX(0.8894);transform-origin:0 0;">DYN</div>
<div style="left:411.6px;top:602px;width:22.9px;height:15px;background:#dddad3;border-top:1px solid #eeece8;border-left:1px solid #eeece8;border-right:1px solid #b8b4ac;border-bottom:1px solid #b8b4ac;box-sizing:border-box"></div>
<div class="t" style="left:413.40px;top:605.50px;font-size:9.80px;color:#101010;font-weight:normal;font-family:'Liberation Sans',sans-serif;transform:scaleX(0.9668);transform-origin:0 0;">LWT</div>
<div style="left:438px;top:602px;width:33.4px;height:15px;background:#d4d0c8;border-top:1px solid #404040;border-left:1px solid #404040;border-right:1px solid #fff;border-bottom:1px solid #fff;box-sizing:border-box"></div>
<div class="t" style="left:440.60px;top:605.50px;font-size:9.80px;color:#101010;font-weight:normal;font-family:'Liberation Sans',sans-serif;transform:scaleX(0.8322);transform-origin:0 0;">MODEL</div>
<div class="t" style="left:816.00px;top:605.30px;font-size:9.80px;color:#101010;font-weight:normal;font-family:'Liberation Sans',sans-serif;transform:scaleX(0.8526);transform-origin:0 0;">Annotation Scale:</div>
<div class="t" style="left:890.00px;top:605.30px;font-size:9.80px;color:#101010;font-weight:normal;font-family:'Liberation Sans',sans-serif;transform:scaleX(0.8589);transform-origin:0 0;">1:1</div>
<svg style="left:904px;top:607px" width="6" height="4"><path d="M0,0 L6,0 L3,3.5z" fill="#101010"/></svg>
<svg style="left:917px;top:602px" width="107" height="16"><path d="M3,12 l4,-8 l4,8z" fill="#b8c8e0" stroke="#4a6a98"/><circle cx="11" cy="3.5" r="2.2" fill="#f8f0a0"/><path d="M24,12 l4,-8 l4,8z" fill="#dcdcdc" stroke="#b0b0b0"/><path d="M29,9 l5,-6" stroke="#c0c0c0" stroke-width="1.4"/><rect x="38.5" y="0.5" width="35" height="14" fill="#dedbd4" stroke="#a8a49c" stroke-width="0.8"/><rect x="42" y="6" width="9" height="7" fill="#c8b818" stroke="#5a4a10"/><path d="M47,6 v-2.5 q3,-3 6,0 v2" stroke="#5a4a10" fill="none" stroke-width="1.5"/><rect x="58" y="2" width="9" height="11" fill="#5a7088" stroke="#203040"/><path d="M61,10 l2.5,2.5 l5,-5" stroke="#20b050" stroke-width="2.2" fill="none"/><path d="M77.5,7 h6.5 l-3.25,3.2z" fill="#101010"/><rect x="91.5" y="1.5" width="12" height="12" fill="#a8c8f0" stroke="#2a4a88" stroke-width="1.4"/></svg>
<div style="left:0px;top:618px;width:1024px;height:22px;background:#d4d0c8;border-top:1px solid #fff;box-sizing:border-box"></div>
<div style="left:2px;top:620px;width:41px;height:19px;background:#d4d0c8;border-top:1px solid #fff;border-left:1px solid #fff;border-right:1px solid #404040;border-bottom:1px solid #404040;box-sizing:border-box"></div>
<svg style="left:4px;top:622px" width="12" height="14"><path d="M1,3 q2,-2 5,0 v5 q-3,-2 -5,0z" fill="#f06030"/><path d="M6,3 q3,-2 5,0 v5 q-2,-2 -5,0z" fill="#40b040"/><path d="M1,8 q2,-2 5,0 v5 q-3,-2 -5,0z" fill="#3070e0"/><path d="M6,8 q3,-2 5,0 v5 q-2,-2 -5,0z" fill="#f0c020"/></svg>
<div class="t" style="left:16.90px;top:624.40px;font-size:9.80px;color:#101010;font-weight:bold;font-family:'Liberation Sans',sans-serif;transform:scaleX(1.0258);transform-origin:0 0;">Start</div>
<svg style="left:48px;top:621px" width="130" height="16"><rect x="2" y="4" width="11" height="8" fill="#2a5ac8" stroke="#1a3a80"/><rect x="3" y="5" width="9" height="4" fill="#5a90e8"/><g transform="translate(2,0)"><circle cx="24" cy="8" r="5.8" fill="#d86818"/><path d="M24,2.5 a5.5,5.5 0 0 1 5,7 q-3,-4 -6,-3z" fill="#3a70a0"/></g><g transform="translate(3,0)"><circle cx="42" cy="8" r="6" fill="#f8c820" stroke="#d89000" stroke-width="0.6"/><path d="M38.5,9 q3.5,4 7,0z" fill="#c02000"/><circle cx="40" cy="6" r="0.9" fill="#402000"/><circle cx="44" cy="6" r="0.9" fill="#402000"/></g><g transform="translate(2.5,0)"><rect x="55.5" y="2.5" width="10" height="11" fill="#f4f8fc" stroke="#6080b0"/><path d="M57,6 l2,5 l2,-4 l2,4 l2,-5" stroke="#3050a0" fill="none" stroke-width="0.8"/></g><g transform="translate(3.7,0)"><rect x="72.5" y="2.5" width="11" height="11" fill="#20a040" stroke="#106020"/><path d="M76,5 v6 M80,5 v6 M76,8 h4" stroke="#fff" stroke-width="1.2"/></g><g transform="translate(4.4,0)"><rect x="90.5" y="2.5" width="11" height="11" fill="#c8d8e0" stroke="#4a6070"/><path d="M94,5 l5,3 l-5,3z" fill="#f0a000"/></g><g transform="translate(5,0)"><circle cx="113" cy="8" r="5.5" fill="#e86020"/><path d="M109,6 q4,-2 8,1 M109,9 q4,-2 8,1" stroke="#f8c080" fill="none"/></g></svg>
<div style="left:187px;top:620px;width:100px;height:19px;background:#d4d0c8;border-top:1px solid #fff;border-left:1px solid #fff;border-right:1px solid #404040;border-bottom:1px solid #404040;box-sizing:border-box"></div>
<div class="t" style="left:205.20px;top:624.60px;font-size:9.80px;color:#101010;font-weight:normal;font-family:'Liberation Sans',sans-serif;transform:scaleX(0.9216);transform-origin:0 0;">Kaspersky Intern...</div>
<svg style="left:191px;top:623px" width="12" height="13"><path d="M2,1 v11 M2,7 l7,-6 M4,5 l6,7" stroke="#d01818" stroke-width="2.4" fill="none"/><path d="M6,9 l5,3" stroke="#101010" stroke-width="2"/></svg>
<div style="left:290px;top:620px;width:103px;height:19px;background:#d4d0c8;border-top:1px solid #fff;border-left:1px solid #fff;border-right:1px solid #404040;border-bottom:1px solid #404040;box-sizing:border-box"></div>
<div class="t" style="left:309.00px;top:624.60px;font-size:9.80px;color:#101010;font-weight:normal;font-family:'Liberation Sans',sans-serif;transform:scaleX(0.9086);transform-origin:0 0;">New Member , my...</div>
<svg style="left:294px;top:623px" width="13" height="13"><circle cx="6.5" cy="6.5" r="5.5" fill="#e07020"/><circle cx="6.5" cy="6.5" r="3" fill="#3a5a9a"/></svg>
<div style="left:396px;top:620px;width:101px;height:19px;background:#ebe9e4;border-top:1px solid #404040;border-left:1px solid #404040;border-right:1px solid #fff;border-bottom:1px solid #fff;box-sizing:border-box"></div>
<div class="t" style="left:414.70px;top:624.60px;font-size:9.80px;color:#101010;font-weight:bold;font-family:'Liberation Sans',sans-serif;transform:scaleX(0.9693);transform-origin:0 0;">AutoCAD 2008 -...</div>
<svg style="left:400px;top:623px" width="13" height="13"><rect x="0.5" y="0.5" width="12" height="12" fill="#2a8a7a" stroke="#105040"/><path d="M3,10 L5,3 L7,10 M8,10 v-3 h3 v3" stroke="#e0f0ec" fill="none" stroke-width="1.1"/></svg>
<div style="left:501px;top:620px;width:100px;height:19px;background:#d4d0c8;border-top:1px solid #fff;border-left:1px solid #fff;border-right:1px solid #404040;border-bottom:1px solid #404040;box-sizing:border-box"></div>
<div class="t" style="left:518.30px;top:624.60px;font-size:9.80px;color:#101010;font-weight:normal;font-family:'Liberation Sans',sans-serif;transform:scaleX(0.8622);transform-origin:0 0;">Downloads</div>
<svg style="left:505px;top:623px" width="13" height="13"><path d="M1,4 h4 l1,1 h6 v7 h-11z" fill="#f0d060" stroke="#a08020" stroke-width="0.8"/><path d="M6,2 l4,0 v4" stroke="#40a040" stroke-width="1.4" fill="none"/></svg>
<div style="left:604px;top:620px;width:101px;height:19px;background:#d4d0c8;border-top:1px solid #fff;border-left:1px solid #fff;border-right:1px solid #404040;border-bottom:1px solid #404040;box-sizing:border-box"></div>
<div class="t" style="left:622.90px;top:624.60px;font-size:9.80px;color:#101010;font-weight:normal;font-family:'Liberation Sans',sans-serif;transform:scaleX(0.9039);transform-origin:0 0;">Untitled - Paint</div>
<svg style="left:608px;top:623px" width="13" height="13"><path d="M2,2 l4,9" stroke="#a08040" stroke-width="2"/><path d="M7,1 l3,2 -4,8z" fill="#f0e0a0" stroke="#806020" stroke-width="0.6"/><circle cx="9" cy="10" r="2" fill="#e04040"/></svg>
<div class="t" style="left:716.30px;top:624.60px;font-size:9.80px;color:#101010;font-weight:normal;font-family:'Liberation Sans',sans-serif;transform:scaleX(0.9109);transform-origin:0 0;">EN</div>
<div style="left:711px;top:620px;width:1px;height:19px;background:#808080"></div>
<div style="left:712px;top:620px;width:1px;height:19px;background:#fff"></div>
<div style="left:736px;top:620px;width:1px;height:19px;background:#808080"></div>
<div style="left:738px;top:621px;width:86px;height:17px;background:#fff;border:1px solid #b0b0b0;box-sizing:border-box"></div>
<div class="t" style="left:741px;top:621px;font-size:14.5px;color:#000;font-weight:normal;font-family:'Liberation Sans',sans-serif;font-family:'Liberation Serif',serif;opacity:0.75"><span style="color:#c8d8f0">G</span><span style="color:#f0c8c8">o</span><span style="color:#f0e0a0">o</span><span style="color:#c8d8f0">g</span><span style="color:#c8e8c8">l</span><span style="color:#f0c8c8">e</span></div>
<svg style="left:826px;top:622px" width="24" height="14"><path d="M1,3 h7 l-3.5,4z" fill="#101010"/><rect x="16.5" y="4.5" width="6" height="6" fill="none" stroke="#101010" stroke-width="1.2"/></svg>
<div style="left:853px;top:620px;width:171px;height:19px;background:#d4d0c8;border-top:1px solid #808080;border-left:1px solid #808080;box-sizing:border-box"></div>
<svg style="left:855px;top:622px" width="120" height="15"><path d="M2,7 l3,-3 M2,7 l3,3 M6,7 l3,-3 M6,7 l3,3" stroke="#101010" stroke-width="1.2"/><path d="M14,2 v11 M14,8 l6,-6 M16,6 l5,7" stroke="#d01818" stroke-width="2.2" fill="none"/><path d="M18,10 l4,3" stroke="#101010" stroke-width="1.8"/><rect x="27" y="2" width="10" height="8" fill="#4a78c8" stroke="#1a3a80"/><rect x="25" y="11" width="13" height="2" fill="#d0a020"/><circle cx="46.5" cy="7.5" r="6" fill="#e04020"/><path d="M46.5,7.5 L52.5,7.5 A6,6 0 0 1 43,12.5z" fill="#40a040"/><path d="M46.5,7.5 L43,12.5 A6,6 0 0 1 41,4z" fill="#f0c020"/><circle cx="46.5" cy="7.5" r="2.6" fill="#3a70d0" stroke="#fff" stroke-width="0.8"/><rect x="54" y="1" width="13" height="9" fill="#808890" stroke="#404850"/><path d="M56,12.5 h3 M62,12.5 h3" stroke="#303030" stroke-width="2.2"/><rect x="79" y="1.5" width="9" height="12" fill="#e8f0e0" stroke="#607060"/><path d="M81,5 h5 M81,8 h5" stroke="#60a060"/><rect x="91" y="4" width="11" height="9" fill="#3a78c8" stroke="#1a3a80"/><rect x="95" y="1.5" width="8" height="6" fill="#a8d8f0" stroke="#1a3a80"/><path d="M107,5 h3 l3,-3 v11 l-3,-3 h-3z" fill="#e8e8e8" stroke="#505050" stroke-width="0.8"/><path d="M115,4 q2,3.5 0,7" stroke="#707070" fill="none"/></svg>
<div class="t" style="left:978.30px;top:624.60px;font-size:9.80px;color:#101010;font-weight:normal;font-family:'Liberation Sans',sans-serif;transform:scaleX(0.8797);transform-origin:0 0;">06:22 PM</div>
</div></body></html>
